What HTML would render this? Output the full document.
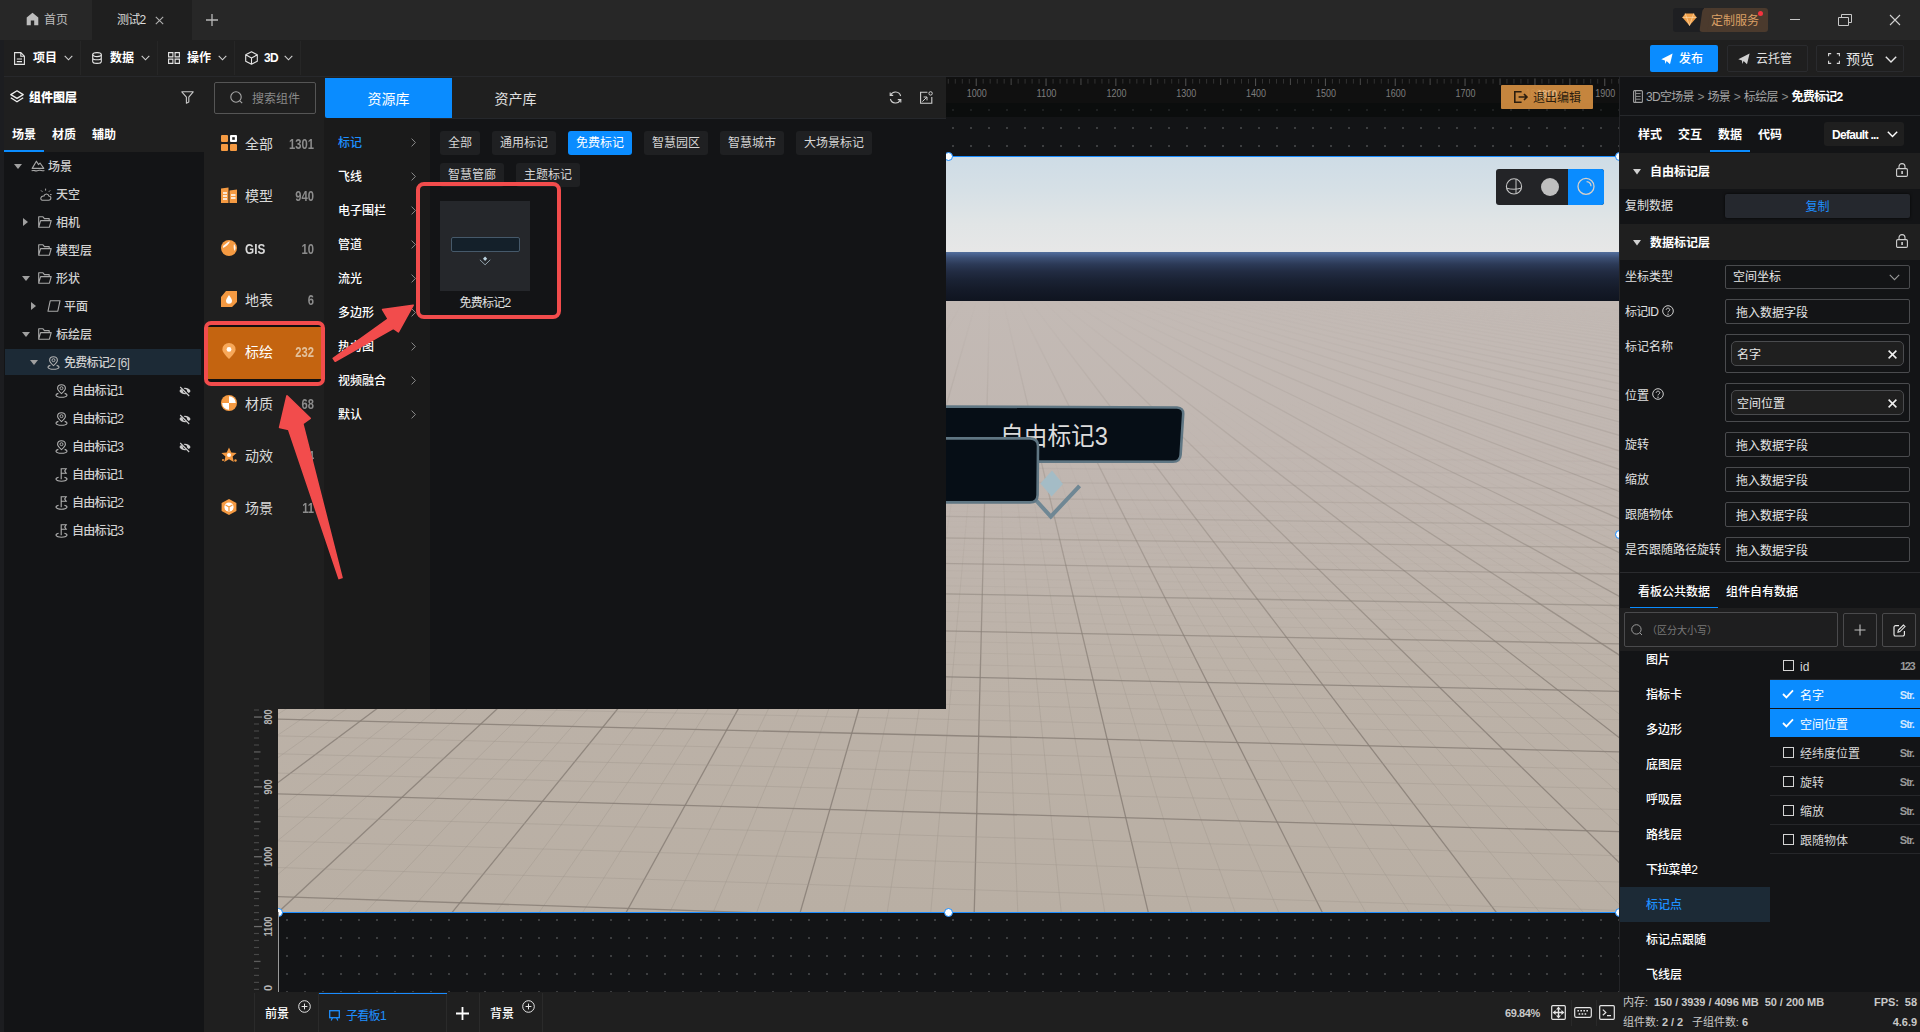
<!DOCTYPE html>
<html lang="zh-CN"><head><meta charset="utf-8"><title>测试2</title>
<style>
*{box-sizing:border-box;margin:0;padding:0}
html,body{width:1920px;height:1032px;overflow:hidden;background:#131416}
body{position:relative;font-family:"Liberation Sans","Noto Sans CJK SC",sans-serif;font-size:12px;color:#e0e0e0;-webkit-font-smoothing:antialiased}
.a{position:absolute}
.t{position:absolute;white-space:nowrap;line-height:22px;height:22px}
.b{font-weight:700}
.n{letter-spacing:-0.7px}
svg{position:absolute;overflow:visible}
.chip{position:absolute;height:24px;line-height:25px;padding:0 8px;background:#1f2022;border-radius:3px;color:#d6d6d6;white-space:nowrap}
.inp{position:absolute;left:1725px;width:185px;border:1px solid #4a4b4e;border-radius:2px;color:#e6e6e6;padding-left:10px;white-space:nowrap}
.pill{position:absolute;left:1731px;width:173px;height:25px;border:1px solid #4a4b4e;border-radius:5px;background:#1f1f1f;line-height:26px;padding-left:5px;color:#e6e6e6}
.lab{position:absolute;left:1625px;white-space:nowrap;color:#e0e0e0;line-height:22px}
.row2{position:absolute;left:1770px;width:150px;height:29px;border-bottom:1px solid #26272a}
</style></head><body>

<div class="a" style="left:0;top:0;width:1920px;height:40px;background:#272727"></div>
<div class="a" style="left:92px;top:0;width:100px;height:40px;background:#1f1f1f"></div>
<svg style="left:26px;top:12px" width="13" height="14" viewBox="0 0 13 14"><path d="M6.5 0.8 L12.3 5.6 V13.2 H8.2 V8.6 H4.8 V13.2 H0.7 V5.6 Z" fill="#bdbdbd"/></svg>
<div class="t" style="left:44px;top:9px;color:#bdbdbd">首页</div>
<div class="t n" style="left:117px;top:9px;color:#dcdcdc">测试2</div>
<svg style="left:155px;top:16px" width="9" height="9" viewBox="0 0 9 9"><path d="M0.8 0.8 L8.2 8.2 M8.2 0.8 L0.8 8.2" stroke="#b0b0b0" stroke-width="1.1" fill="none"/></svg>
<svg style="left:206px;top:14px" width="12" height="12" viewBox="0 0 12 12"><path d="M6 0 V12 M0 6 H12" stroke="#b8b8b8" stroke-width="1.3" fill="none"/></svg>
<div class="a" style="left:1672.5px;top:8px;width:32px;height:24px;background:#1e1f22;border-radius:3px 0 0 3px"></div>
<div class="a" style="left:1704px;top:8px;width:64px;height:24px;background:#4b3a2d;border-radius:0 3px 3px 0"></div><div class="a" style="left:1700.5px;top:8px;width:8px;height:24px;background:#4b3a2d;border-radius:4px 0 0 3px;transform:skewX(-8deg)"></div>
<svg style="left:1682px;top:13px" width="15" height="13" viewBox="0 0 15 13"><path d="M3.2 0.5 H11.8 L14.6 4.4 L7.5 12.6 L0.4 4.4 Z" fill="#f0a04a"/><path d="M3.2 0.5 L7.5 12.6 L11.8 0.5 M0.4 4.4 H14.6" stroke="#ffd9a8" stroke-width="0.7" fill="none"/></svg>
<div class="t" style="left:1711px;top:10px;color:#dba066">定制服务</div>
<div class="a" style="left:1758px;top:11px;width:5px;height:5px;border-radius:50%;background:#f5333f"></div>
<div class="a" style="left:1790px;top:19px;width:10px;height:1px;background:#c8c8c8"></div>
<svg style="left:1838px;top:14px" width="14" height="12" viewBox="0 0 14 12"><path d="M0.5 3.5 H10.5 V11.5 H0.5 Z M3.5 3.5 V0.5 H13.5 V8.5 H10.5" stroke="#c8c8c8" stroke-width="1" fill="none"/></svg>
<svg style="left:1890px;top:15px" width="10" height="10" viewBox="0 0 10 10"><path d="M0 0 L10 10 M10 0 L0 10" stroke="#d0d0d0" stroke-width="1.1" fill="none"/></svg>
<div class="a" style="left:0;top:40px;width:1920px;height:37px;background:#1f1f1f"></div>
<div class="a" style="left:0;top:40px;width:4px;height:992px;background:#1c1d20"></div>
<div class="a" style="left:80px;top:41px;width:1px;height:34px;background:#262626"></div>
<div class="a" style="left:157px;top:41px;width:1px;height:34px;background:#262626"></div>
<div class="a" style="left:234px;top:41px;width:1px;height:34px;background:#262626"></div>
<div class="a" style="left:300px;top:41px;width:1px;height:34px;background:#262626"></div>
<div class="a" style="left:4px;top:76px;width:1916px;height:1px;background:#27282b"></div>
<svg style="left:14px;top:52px" width="11" height="13" viewBox="0 0 11 13"><path d="M0.6 0.6 H6.8 L10.4 4.2 V12.4 H0.6 Z M6.8 0.6 V4.2 H10.4 M2.8 7 H8 M2.8 9.6 H8" stroke="#e6e6e6" stroke-width="1.1" fill="none"/></svg>
<div class="t b" style="left:33px;top:47px;color:#fff">项目</div>
<svg style="left:64px;top:55px" width="9" height="6" viewBox="0 0 9 6"><path d="M0.7 0.8 L4.5 4.8 L8.3 0.8" stroke="#d0d0d0" stroke-width="1.1" fill="none"/></svg>
<svg style="left:92px;top:52px" width="10" height="12" viewBox="0 0 10 12"><ellipse cx="5" cy="2.6" rx="4.3" ry="2" stroke="#e6e6e6" stroke-width="1.1" fill="none"/><path d="M0.7 2.6 V9.4 C0.7 12 9.3 12 9.3 9.4 V2.6 M0.7 6 C0.7 8.4 9.3 8.4 9.3 6" stroke="#e6e6e6" stroke-width="1.1" fill="none"/></svg>
<div class="t b" style="left:110px;top:47px;color:#fff">数据</div>
<svg style="left:141px;top:55px" width="9" height="6" viewBox="0 0 9 6"><path d="M0.7 0.8 L4.5 4.8 L8.3 0.8" stroke="#d0d0d0" stroke-width="1.1" fill="none"/></svg>
<svg style="left:168px;top:52px" width="12" height="12" viewBox="0 0 12 12"><path d="M0.6 0.6 H4.9 V4.9 H0.6 Z M7.1 0.6 H11.4 V4.9 H7.1 Z M0.6 7.1 H4.9 V11.4 H0.6 Z M7.1 7.1 H11.4 V11.4 H7.1 Z" stroke="#e6e6e6" stroke-width="1.1" fill="none"/></svg>
<div class="t b" style="left:187px;top:47px;color:#fff">操作</div>
<svg style="left:218px;top:55px" width="9" height="6" viewBox="0 0 9 6"><path d="M0.7 0.8 L4.5 4.8 L8.3 0.8" stroke="#d0d0d0" stroke-width="1.1" fill="none"/></svg>
<svg style="left:245px;top:51px" width="13" height="14" viewBox="0 0 13 14"><path d="M6.5 0.7 L12.3 3.8 V10.2 L6.5 13.3 L0.7 10.2 V3.8 Z M0.7 3.8 L6.5 7 L12.3 3.8 M6.5 7 V13.3" stroke="#e6e6e6" stroke-width="1.1" fill="none" stroke-linejoin="round"/></svg>
<div class="t b n" style="left:264px;top:47px;color:#fff">3D</div>
<svg style="left:284px;top:55px" width="9" height="6" viewBox="0 0 9 6"><path d="M0.7 0.8 L4.5 4.8 L8.3 0.8" stroke="#d0d0d0" stroke-width="1.1" fill="none"/></svg>
<div class="a" style="left:1650px;top:45px;width:68px;height:27px;background:#0a8cff;border-radius:2px"></div>
<svg style="left:1661px;top:53px" width="12" height="12" viewBox="0 0 12 12"><path d="M0.3 6.2 L11.6 0.6 L9 11.2 L5.6 8 L4.4 11 L3.9 7.4 Z" fill="#fff"/></svg>
<div class="t" style="left:1679px;top:48px;color:#fff;font-weight:500">发布</div>
<div class="a" style="left:1727px;top:45px;width:81px;height:27px;border:1px solid #2a2b2e;border-radius:2px"></div>
<svg style="left:1738px;top:53px" width="12" height="12" viewBox="0 0 12 12"><path d="M0.3 6.2 L11.6 0.6 L9 11.2 L5.6 8 L4.4 11 L3.9 7.4 Z" fill="#d0d0d0"/></svg>
<div class="t" style="left:1756px;top:48px;color:#e0e0e0">云托管</div>
<div class="a" style="left:1816px;top:45px;width:88px;height:27px;border:1px solid #2a2b2e;border-radius:2px"></div>
<svg style="left:1828px;top:53px" width="12" height="11" viewBox="0 0 12 11"><path d="M0.6 3.2 V0.6 H3.2 M8.8 0.6 H11.4 V3.2 M11.4 7.8 V10.4 H8.8 M3.2 10.4 H0.6 V7.8" stroke="#d8d8d8" stroke-width="1.1" fill="none"/></svg>
<div class="t" style="left:1846px;top:48px;color:#e6e6e6;font-size:14px">预览</div>
<svg style="left:1885px;top:56px" width="12" height="7" viewBox="0 0 12 7"><path d="M0.8 0.8 L6 6 L11.2 0.8" stroke="#e6e6e6" stroke-width="1.4" fill="none"/></svg>
<div class="a" style="left:4px;top:77px;width:200px;height:75px;background:#1f1f1f"></div>
<div class="a" style="left:4px;top:152px;width:200px;height:880px;background:#131416"></div>
<svg style="left:10px;top:90px" width="14" height="13" viewBox="0 0 14 13"><path d="M7 0.8 L13.2 4.6 L7 8.4 L0.8 4.6 Z M0.8 7.8 L7 11.8 L13.2 7.8" stroke="#f0f0f0" stroke-width="1.3" fill="none" stroke-linejoin="round"/></svg>
<div class="t b" style="left:29px;top:87px;color:#fff;font-weight:900">组件图层</div>
<svg style="left:181px;top:91px" width="13" height="13" viewBox="0 0 13 13"><path d="M0.8 0.8 H12.2 L7.8 6.2 V11 L5.4 12.2 V6.2 Z" stroke="#c8c8c8" stroke-width="1.1" fill="none" stroke-linejoin="round"/></svg>
<div class="t b" style="left:12px;top:124px;color:#fff">场景</div>
<div class="t b" style="left:52px;top:124px;color:#fff">材质</div>
<div class="t b" style="left:92px;top:124px;color:#fff">辅助</div>
<div class="a" style="left:4px;top:150px;width:40px;height:2px;background:#0a8cff"></div>
<div class="a" style="left:5px;top:349px;width:196px;height:26px;background:#1c2a36"></div>
<svg style="left:14px;top:164px" width="8" height="5" viewBox="0 0 8 5"><path d="M0 0 H8 L4 5 Z" fill="#a0a0a0"/></svg>
<svg style="left:31px;top:160px" width="14" height="12" viewBox="0 0 14 12"><path d="M1.2 8.4 L5.4 1.2 L7.6 4.6 L9 3 L12.8 8.4 Z M0.6 10.8 C3 9.6 4.4 11.6 7 10.6 C9.6 9.6 11 11.4 13.4 10.4" stroke="#a8a8a8" stroke-width="1.1" fill="none" stroke-linejoin="round"/></svg>
<div class="t" style="left:48px;top:156px;color:#d0d0d0;font-weight:500">场景</div>
<svg style="left:39px;top:188px" width="13" height="13" viewBox="0 0 13 13"><path d="M3.4 12.2 H9.6 C12.6 12.2 12.6 8 9.8 8 C9.6 5.4 5.4 5.2 5 8 C1.4 7.6 0.8 12.2 3.4 12.2 Z" stroke="#a8a8a8" stroke-width="1.1" fill="none"/><path d="M6.6 2.6 V0.6 M9.8 3.8 L11.2 2.4 M3.4 3.8 L2 2.4 M11 6.6 H12.6" stroke="#a8a8a8" stroke-width="1" fill="none"/></svg>
<div class="t" style="left:56px;top:184px;color:#d0d0d0;font-weight:500">天空</div>
<svg style="left:23px;top:218px" width="5" height="8" viewBox="0 0 5 8"><path d="M0 0 V8 L5 4 Z" fill="#a0a0a0"/></svg>
<svg style="left:38px;top:216px" width="14" height="12" viewBox="0 0 14 12"><path d="M0.7 11.2 V0.8 H5 L6.4 2.6 H11.2 V4.6 M0.7 11.2 L2.6 4.6 H13.2 L11.4 11.2 Z" stroke="#a8a8a8" stroke-width="1.1" fill="none" stroke-linejoin="round"/></svg>
<div class="t" style="left:56px;top:212px;color:#d0d0d0;font-weight:500">相机</div>
<svg style="left:38px;top:244px" width="14" height="12" viewBox="0 0 14 12"><path d="M0.7 11.2 V0.8 H5 L6.4 2.6 H11.2 V4.6 M0.7 11.2 L2.6 4.6 H13.2 L11.4 11.2 Z" stroke="#a8a8a8" stroke-width="1.1" fill="none" stroke-linejoin="round"/></svg>
<div class="t" style="left:56px;top:240px;color:#d0d0d0;font-weight:500">模型层</div>
<svg style="left:22px;top:276px" width="8" height="5" viewBox="0 0 8 5"><path d="M0 0 H8 L4 5 Z" fill="#a0a0a0"/></svg>
<svg style="left:38px;top:272px" width="14" height="12" viewBox="0 0 14 12"><path d="M0.7 11.2 V0.8 H5 L6.4 2.6 H11.2 V4.6 M0.7 11.2 L2.6 4.6 H13.2 L11.4 11.2 Z" stroke="#a8a8a8" stroke-width="1.1" fill="none" stroke-linejoin="round"/></svg>
<div class="t" style="left:56px;top:268px;color:#d0d0d0;font-weight:500">形状</div>
<svg style="left:31px;top:302px" width="5" height="8" viewBox="0 0 5 8"><path d="M0 0 V8 L5 4 Z" fill="#a0a0a0"/></svg>
<svg style="left:47px;top:300px" width="14" height="12" viewBox="0 0 14 12"><path d="M3.2 0.8 H13 L10.8 11.2 H1 Z" stroke="#a8a8a8" stroke-width="1.1" fill="none" stroke-linejoin="round"/></svg>
<div class="t" style="left:64px;top:296px;color:#d0d0d0;font-weight:500">平面</div>
<svg style="left:22px;top:332px" width="8" height="5" viewBox="0 0 8 5"><path d="M0 0 H8 L4 5 Z" fill="#a0a0a0"/></svg>
<svg style="left:38px;top:328px" width="14" height="12" viewBox="0 0 14 12"><path d="M0.7 11.2 V0.8 H5 L6.4 2.6 H11.2 V4.6 M0.7 11.2 L2.6 4.6 H13.2 L11.4 11.2 Z" stroke="#a8a8a8" stroke-width="1.1" fill="none" stroke-linejoin="round"/></svg>
<div class="t" style="left:56px;top:324px;color:#d0d0d0;font-weight:500">标绘层</div>
<svg style="left:30px;top:360px" width="8" height="5" viewBox="0 0 8 5"><path d="M0 0 H8 L4 5 Z" fill="#a0a0a0"/></svg>
<svg style="left:47px;top:356px" width="13" height="14" viewBox="0 0 13 14"><path d="M6.5 9.6 C3.6 7 2.6 5.6 2.6 4.2 C2.6 2.2 4.2 0.7 6.5 0.7 C8.8 0.7 10.4 2.2 10.4 4.2 C10.4 5.6 9.4 7 6.5 9.6 Z" stroke="#b0b0b0" stroke-width="1.1" fill="none"/><circle cx="6.5" cy="4.2" r="1.5" stroke="#b0b0b0" stroke-width="1" fill="none"/><path d="M3.4 9.4 C-0.6 10.4 0.4 13.2 6.5 13.2 C12.6 13.2 13.6 10.4 9.6 9.4" stroke="#b0b0b0" stroke-width="1.1" fill="none"/></svg>
<div class="t n" style="left:64px;top:352px;color:#d0d0d0;font-weight:500">免费标记2 [6]</div>
<svg style="left:55px;top:384px" width="13" height="14" viewBox="0 0 13 14"><path d="M6.5 9.6 C3.6 7 2.6 5.6 2.6 4.2 C2.6 2.2 4.2 0.7 6.5 0.7 C8.8 0.7 10.4 2.2 10.4 4.2 C10.4 5.6 9.4 7 6.5 9.6 Z" stroke="#b0b0b0" stroke-width="1.1" fill="none"/><circle cx="6.5" cy="4.2" r="1.5" stroke="#b0b0b0" stroke-width="1" fill="none"/><path d="M3.4 9.4 C-0.6 10.4 0.4 13.2 6.5 13.2 C12.6 13.2 13.6 10.4 9.6 9.4" stroke="#b0b0b0" stroke-width="1.1" fill="none"/></svg>
<div class="t n" style="left:72px;top:380px;color:#d0d0d0;font-weight:500">自由标记1</div>
<svg style="left:179px;top:386px" width="12" height="10" viewBox="0 0 12 10"><path d="M0.4 5 C3 0.6 9 0.6 11.6 5 C9 9.4 3 9.4 0.4 5 Z" fill="#cfcfcf"/><circle cx="6" cy="5" r="2.1" fill="#131416"/><path d="M1.6 0.6 L10.6 9.6" stroke="#131416" stroke-width="2.2"/><path d="M1.2 1 L10.2 10" stroke="#cfcfcf" stroke-width="1.1"/></svg>
<svg style="left:55px;top:412px" width="13" height="14" viewBox="0 0 13 14"><path d="M6.5 9.6 C3.6 7 2.6 5.6 2.6 4.2 C2.6 2.2 4.2 0.7 6.5 0.7 C8.8 0.7 10.4 2.2 10.4 4.2 C10.4 5.6 9.4 7 6.5 9.6 Z" stroke="#b0b0b0" stroke-width="1.1" fill="none"/><circle cx="6.5" cy="4.2" r="1.5" stroke="#b0b0b0" stroke-width="1" fill="none"/><path d="M3.4 9.4 C-0.6 10.4 0.4 13.2 6.5 13.2 C12.6 13.2 13.6 10.4 9.6 9.4" stroke="#b0b0b0" stroke-width="1.1" fill="none"/></svg>
<div class="t n" style="left:72px;top:408px;color:#d0d0d0;font-weight:500">自由标记2</div>
<svg style="left:179px;top:414px" width="12" height="10" viewBox="0 0 12 10"><path d="M0.4 5 C3 0.6 9 0.6 11.6 5 C9 9.4 3 9.4 0.4 5 Z" fill="#cfcfcf"/><circle cx="6" cy="5" r="2.1" fill="#131416"/><path d="M1.6 0.6 L10.6 9.6" stroke="#131416" stroke-width="2.2"/><path d="M1.2 1 L10.2 10" stroke="#cfcfcf" stroke-width="1.1"/></svg>
<svg style="left:55px;top:440px" width="13" height="14" viewBox="0 0 13 14"><path d="M6.5 9.6 C3.6 7 2.6 5.6 2.6 4.2 C2.6 2.2 4.2 0.7 6.5 0.7 C8.8 0.7 10.4 2.2 10.4 4.2 C10.4 5.6 9.4 7 6.5 9.6 Z" stroke="#b0b0b0" stroke-width="1.1" fill="none"/><circle cx="6.5" cy="4.2" r="1.5" stroke="#b0b0b0" stroke-width="1" fill="none"/><path d="M3.4 9.4 C-0.6 10.4 0.4 13.2 6.5 13.2 C12.6 13.2 13.6 10.4 9.6 9.4" stroke="#b0b0b0" stroke-width="1.1" fill="none"/></svg>
<div class="t n" style="left:72px;top:436px;color:#d0d0d0;font-weight:500">自由标记3</div>
<svg style="left:179px;top:442px" width="12" height="10" viewBox="0 0 12 10"><path d="M0.4 5 C3 0.6 9 0.6 11.6 5 C9 9.4 3 9.4 0.4 5 Z" fill="#cfcfcf"/><circle cx="6" cy="5" r="2.1" fill="#131416"/><path d="M1.6 0.6 L10.6 9.6" stroke="#131416" stroke-width="2.2"/><path d="M1.2 1 L10.2 10" stroke="#cfcfcf" stroke-width="1.1"/></svg>
<svg style="left:55px;top:468px" width="13" height="14" viewBox="0 0 13 14"><path d="M6.2 11.2 V0.8 H11.2 L9.7 3 L11.2 5.2 H6.2" stroke="#b0b0b0" stroke-width="1.1" fill="none"/><path d="M3.6 9.2 C-0.6 10.2 0.2 13.2 6.5 13.2 C12.8 13.2 13.6 10.2 9.4 9.2" stroke="#b0b0b0" stroke-width="1.1" fill="none"/></svg>
<div class="t n" style="left:72px;top:464px;color:#d0d0d0;font-weight:500">自由标记1</div>
<svg style="left:55px;top:496px" width="13" height="14" viewBox="0 0 13 14"><path d="M6.2 11.2 V0.8 H11.2 L9.7 3 L11.2 5.2 H6.2" stroke="#b0b0b0" stroke-width="1.1" fill="none"/><path d="M3.6 9.2 C-0.6 10.2 0.2 13.2 6.5 13.2 C12.8 13.2 13.6 10.2 9.4 9.2" stroke="#b0b0b0" stroke-width="1.1" fill="none"/></svg>
<div class="t n" style="left:72px;top:492px;color:#d0d0d0;font-weight:500">自由标记2</div>
<svg style="left:55px;top:524px" width="13" height="14" viewBox="0 0 13 14"><path d="M6.2 11.2 V0.8 H11.2 L9.7 3 L11.2 5.2 H6.2" stroke="#b0b0b0" stroke-width="1.1" fill="none"/><path d="M3.6 9.2 C-0.6 10.2 0.2 13.2 6.5 13.2 C12.8 13.2 13.6 10.2 9.4 9.2" stroke="#b0b0b0" stroke-width="1.1" fill="none"/></svg>
<div class="t n" style="left:72px;top:520px;color:#d0d0d0;font-weight:500">自由标记3</div>
<div class="a" style="left:204px;top:77px;width:1416px;height:915px;background-color:#131416;background-image:radial-gradient(circle,#3d3e40 0.75px,transparent 1.05px);background-size:18px 18px;background-position:2px 6px"></div>
<div class="a" style="left:254px;top:77px;width:1366px;height:26px;background:#101010"></div>
<div class="a" style="left:254px;top:103px;width:1366px;height:14px;background:rgba(6,7,7,0.55)"></div>
<svg style="left:0;top:0" width="1920" height="120" viewBox="0 0 1920 120"><rect x="905.8" y="78.5" width="1.1" height="7.5" fill="#4d4d4d"/><rect x="912.9" y="79" width="0.9" height="4.6" fill="#363636"/><rect x="919.9" y="79" width="0.9" height="4.6" fill="#363636"/><rect x="926.9" y="79" width="0.9" height="4.6" fill="#363636"/><rect x="933.8" y="79" width="0.9" height="4.6" fill="#363636"/><rect x="940.7" y="78.5" width="1.1" height="6.5" fill="#444"/><rect x="947.8" y="79" width="0.9" height="4.6" fill="#363636"/><rect x="954.8" y="79" width="0.9" height="4.6" fill="#363636"/><rect x="961.8" y="79" width="0.9" height="4.6" fill="#363636"/><rect x="968.8" y="79" width="0.9" height="4.6" fill="#363636"/><rect x="975.7" y="78.5" width="1.1" height="7.5" fill="#4d4d4d"/><rect x="982.7" y="79" width="0.9" height="4.6" fill="#363636"/><rect x="989.7" y="79" width="0.9" height="4.6" fill="#363636"/><rect x="996.7" y="79" width="0.9" height="4.6" fill="#363636"/><rect x="1003.7" y="79" width="0.9" height="4.6" fill="#363636"/><rect x="1010.6" y="78.5" width="1.1" height="6.5" fill="#444"/><rect x="1017.7" y="79" width="0.9" height="4.6" fill="#363636"/><rect x="1024.6" y="79" width="0.9" height="4.6" fill="#363636"/><rect x="1031.6" y="79" width="0.9" height="4.6" fill="#363636"/><rect x="1038.6" y="79" width="0.9" height="4.6" fill="#363636"/><rect x="1045.5" y="78.5" width="1.1" height="7.5" fill="#4d4d4d"/><rect x="1052.6" y="79" width="0.9" height="4.6" fill="#363636"/><rect x="1059.6" y="79" width="0.9" height="4.6" fill="#363636"/><rect x="1066.5" y="79" width="0.9" height="4.6" fill="#363636"/><rect x="1073.5" y="79" width="0.9" height="4.6" fill="#363636"/><rect x="1080.4" y="78.5" width="1.1" height="6.5" fill="#444"/><rect x="1087.5" y="79" width="0.9" height="4.6" fill="#363636"/><rect x="1094.5" y="79" width="0.9" height="4.6" fill="#363636"/><rect x="1101.5" y="79" width="0.9" height="4.6" fill="#363636"/><rect x="1108.4" y="79" width="0.9" height="4.6" fill="#363636"/><rect x="1115.3" y="78.5" width="1.1" height="7.5" fill="#4d4d4d"/><rect x="1122.4" y="79" width="0.9" height="4.6" fill="#363636"/><rect x="1129.4" y="79" width="0.9" height="4.6" fill="#363636"/><rect x="1136.4" y="79" width="0.9" height="4.6" fill="#363636"/><rect x="1143.4" y="79" width="0.9" height="4.6" fill="#363636"/><rect x="1150.2" y="78.5" width="1.1" height="6.5" fill="#444"/><rect x="1157.3" y="79" width="0.9" height="4.6" fill="#363636"/><rect x="1164.3" y="79" width="0.9" height="4.6" fill="#363636"/><rect x="1171.3" y="79" width="0.9" height="4.6" fill="#363636"/><rect x="1178.3" y="79" width="0.9" height="4.6" fill="#363636"/><rect x="1185.2" y="78.5" width="1.1" height="7.5" fill="#4d4d4d"/><rect x="1192.3" y="79" width="0.9" height="4.6" fill="#363636"/><rect x="1199.2" y="79" width="0.9" height="4.6" fill="#363636"/><rect x="1206.2" y="79" width="0.9" height="4.6" fill="#363636"/><rect x="1213.2" y="79" width="0.9" height="4.6" fill="#363636"/><rect x="1220.1" y="78.5" width="1.1" height="6.5" fill="#444"/><rect x="1227.2" y="79" width="0.9" height="4.6" fill="#363636"/><rect x="1234.2" y="79" width="0.9" height="4.6" fill="#363636"/><rect x="1241.1" y="79" width="0.9" height="4.6" fill="#363636"/><rect x="1248.1" y="79" width="0.9" height="4.6" fill="#363636"/><rect x="1255.0" y="78.5" width="1.1" height="7.5" fill="#4d4d4d"/><rect x="1262.1" y="79" width="0.9" height="4.6" fill="#363636"/><rect x="1269.1" y="79" width="0.9" height="4.6" fill="#363636"/><rect x="1276.1" y="79" width="0.9" height="4.6" fill="#363636"/><rect x="1283.0" y="79" width="0.9" height="4.6" fill="#363636"/><rect x="1289.9" y="78.5" width="1.1" height="6.5" fill="#444"/><rect x="1297.0" y="79" width="0.9" height="4.6" fill="#363636"/><rect x="1304.0" y="79" width="0.9" height="4.6" fill="#363636"/><rect x="1311.0" y="79" width="0.9" height="4.6" fill="#363636"/><rect x="1318.0" y="79" width="0.9" height="4.6" fill="#363636"/><rect x="1324.9" y="78.5" width="1.1" height="7.5" fill="#4d4d4d"/><rect x="1331.9" y="79" width="0.9" height="4.6" fill="#363636"/><rect x="1338.9" y="79" width="0.9" height="4.6" fill="#363636"/><rect x="1345.9" y="79" width="0.9" height="4.6" fill="#363636"/><rect x="1352.9" y="79" width="0.9" height="4.6" fill="#363636"/><rect x="1359.8" y="78.5" width="1.1" height="6.5" fill="#444"/><rect x="1366.9" y="79" width="0.9" height="4.6" fill="#363636"/><rect x="1373.8" y="79" width="0.9" height="4.6" fill="#363636"/><rect x="1380.8" y="79" width="0.9" height="4.6" fill="#363636"/><rect x="1387.8" y="79" width="0.9" height="4.6" fill="#363636"/><rect x="1394.7" y="78.5" width="1.1" height="7.5" fill="#4d4d4d"/><rect x="1401.8" y="79" width="0.9" height="4.6" fill="#363636"/><rect x="1408.8" y="79" width="0.9" height="4.6" fill="#363636"/><rect x="1415.7" y="79" width="0.9" height="4.6" fill="#363636"/><rect x="1422.7" y="79" width="0.9" height="4.6" fill="#363636"/><rect x="1429.6" y="78.5" width="1.1" height="6.5" fill="#444"/><rect x="1436.7" y="79" width="0.9" height="4.6" fill="#363636"/><rect x="1443.7" y="79" width="0.9" height="4.6" fill="#363636"/><rect x="1450.7" y="79" width="0.9" height="4.6" fill="#363636"/><rect x="1457.6" y="79" width="0.9" height="4.6" fill="#363636"/><rect x="1464.5" y="78.5" width="1.1" height="7.5" fill="#4d4d4d"/><rect x="1471.6" y="79" width="0.9" height="4.6" fill="#363636"/><rect x="1478.6" y="79" width="0.9" height="4.6" fill="#363636"/><rect x="1485.6" y="79" width="0.9" height="4.6" fill="#363636"/><rect x="1492.6" y="79" width="0.9" height="4.6" fill="#363636"/><rect x="1499.5" y="78.5" width="1.1" height="6.5" fill="#444"/><rect x="1506.5" y="79" width="0.9" height="4.6" fill="#363636"/><rect x="1513.5" y="79" width="0.9" height="4.6" fill="#363636"/><rect x="1520.5" y="79" width="0.9" height="4.6" fill="#363636"/><rect x="1527.5" y="79" width="0.9" height="4.6" fill="#363636"/><rect x="1534.4" y="78.5" width="1.1" height="7.5" fill="#4d4d4d"/><rect x="1541.5" y="79" width="0.9" height="4.6" fill="#363636"/><rect x="1548.4" y="79" width="0.9" height="4.6" fill="#363636"/><rect x="1555.4" y="79" width="0.9" height="4.6" fill="#363636"/><rect x="1562.4" y="79" width="0.9" height="4.6" fill="#363636"/><rect x="1569.3" y="78.5" width="1.1" height="6.5" fill="#444"/><rect x="1576.4" y="79" width="0.9" height="4.6" fill="#363636"/><rect x="1583.4" y="79" width="0.9" height="4.6" fill="#363636"/><rect x="1590.3" y="79" width="0.9" height="4.6" fill="#363636"/><rect x="1597.3" y="79" width="0.9" height="4.6" fill="#363636"/><rect x="1604.2" y="78.5" width="1.1" height="7.5" fill="#4d4d4d"/><rect x="1611.3" y="79" width="0.9" height="4.6" fill="#363636"/><rect x="1618.3" y="79" width="0.9" height="4.6" fill="#363636"/><rect x="1625.3" y="79" width="0.9" height="4.6" fill="#363636"/><text x="976.7" y="97" text-anchor="middle" font-size="11" fill="#7d7d7d" font-family="Liberation Sans, sans-serif" textLength="20" lengthAdjust="spacingAndGlyphs">1000</text><text x="1046.5" y="97" text-anchor="middle" font-size="11" fill="#7d7d7d" font-family="Liberation Sans, sans-serif" textLength="20" lengthAdjust="spacingAndGlyphs">1100</text><text x="1116.4" y="97" text-anchor="middle" font-size="11" fill="#7d7d7d" font-family="Liberation Sans, sans-serif" textLength="20" lengthAdjust="spacingAndGlyphs">1200</text><text x="1186.2" y="97" text-anchor="middle" font-size="11" fill="#7d7d7d" font-family="Liberation Sans, sans-serif" textLength="20" lengthAdjust="spacingAndGlyphs">1300</text><text x="1256.1" y="97" text-anchor="middle" font-size="11" fill="#7d7d7d" font-family="Liberation Sans, sans-serif" textLength="20" lengthAdjust="spacingAndGlyphs">1400</text><text x="1325.9" y="97" text-anchor="middle" font-size="11" fill="#7d7d7d" font-family="Liberation Sans, sans-serif" textLength="20" lengthAdjust="spacingAndGlyphs">1500</text><text x="1395.7" y="97" text-anchor="middle" font-size="11" fill="#7d7d7d" font-family="Liberation Sans, sans-serif" textLength="20" lengthAdjust="spacingAndGlyphs">1600</text><text x="1465.6" y="97" text-anchor="middle" font-size="11" fill="#7d7d7d" font-family="Liberation Sans, sans-serif" textLength="20" lengthAdjust="spacingAndGlyphs">1700</text><text x="1535.4" y="97" text-anchor="middle" font-size="11" fill="#7d7d7d" font-family="Liberation Sans, sans-serif" textLength="20" lengthAdjust="spacingAndGlyphs">1800</text><text x="1605.3" y="97" text-anchor="middle" font-size="11" fill="#7d7d7d" font-family="Liberation Sans, sans-serif" textLength="20" lengthAdjust="spacingAndGlyphs">1900</text></svg>
<div class="a" style="left:278px;top:157px;width:1341px;height:755px;overflow:hidden;background:#beb4ac">
<div class="a" style="left:0;top:0;width:1341px;height:95px;background:linear-gradient(#cedce6 0%,#d6e0e6 35%,#e1e5e6 70%,#e7e7e7 100%)"></div>
<div class="a" style="left:0;top:94.7px;width:1341px;height:51px;background:linear-gradient(#54709c 0%,#4a6390 4%,#3b4e72 12%,#2c3a57 24%,#222c43 38%,#1a2234 55%,#141a28 75%,#0e131e 100%)"></div>
<div class="a" style="left:0;top:144px;width:1341px;height:611px;background:linear-gradient(#c3bab5 0%,#c0b6b0 30%,#bcb2a8 60%,#b9afa4 100%)"></div>
<svg style="left:0;top:0" width="1341" height="755" viewBox="278 157 1341 755"><defs><clipPath id="gc"><rect x="278" y="301" width="1341" height="611"/></clipPath><linearGradient id="ga" gradientUnits="userSpaceOnUse" x1="0" y1="301" x2="0" y2="912"><stop offset="0.000" stop-color="#fff" stop-opacity="0.00"/><stop offset="0.064" stop-color="#fff" stop-opacity="0.06"/><stop offset="0.244" stop-color="#fff" stop-opacity="0.30"/><stop offset="0.408" stop-color="#fff" stop-opacity="0.55"/><stop offset="0.653" stop-color="#fff" stop-opacity="1.00"/><stop offset="1.000" stop-color="#fff" stop-opacity="1.00"/></linearGradient><mask id="mga" maskUnits="userSpaceOnUse" x="278" y="301" width="1341" height="611"><rect x="278" y="301" width="1341" height="611" fill="url(#ga)"/></mask><linearGradient id="gb" gradientUnits="userSpaceOnUse" x1="0" y1="301" x2="0" y2="912"><stop offset="0.000" stop-color="#fff" stop-opacity="0.00"/><stop offset="0.162" stop-color="#fff" stop-opacity="0.00"/><stop offset="0.326" stop-color="#fff" stop-opacity="0.25"/><stop offset="0.489" stop-color="#fff" stop-opacity="0.60"/><stop offset="0.702" stop-color="#fff" stop-opacity="1.00"/><stop offset="1.000" stop-color="#fff" stop-opacity="1.00"/></linearGradient><mask id="mgb" maskUnits="userSpaceOnUse" x="278" y="301" width="1341" height="611"><rect x="278" y="301" width="1341" height="611" fill="url(#gb)"/></mask></defs><g clip-path="url(#gc)"><g mask="url(#mgb)"><path d="M457.1 301.0 L-5997.9 917.6 M460.5 301.0 L-5954.0 917.6 M463.8 301.0 L-5910.2 917.6 M470.5 301.0 L-5822.5 917.6 M473.9 301.0 L-5778.6 917.6 M477.2 301.0 L-5734.8 917.6 M483.9 301.0 L-5647.1 917.6 M487.3 301.0 L-5603.2 917.6 M490.6 301.0 L-5559.4 917.6 M497.3 301.0 L-5471.7 917.6 M500.7 301.0 L-5427.8 917.6 M504.0 301.0 L-5384.0 917.6 M510.7 301.0 L-5296.3 917.6 M514.1 301.0 L-5252.4 917.6 M517.4 301.0 L-5208.6 917.6 M524.1 301.0 L-5120.9 917.6 M527.5 301.0 L-5077.0 917.6 M530.8 301.0 L-5033.2 917.6 M537.5 301.0 L-4945.5 917.6 M540.8 301.0 L-4901.7 917.6 M544.2 301.0 L-4857.8 917.6 M550.9 301.0 L-4770.1 917.6 M554.2 301.0 L-4726.3 917.6 M557.6 301.0 L-4682.4 917.6 M564.3 301.0 L-4594.7 917.6 M567.6 301.0 L-4550.9 917.6 M571.0 301.0 L-4507.0 917.6 M577.7 301.0 L-4419.3 917.6 M581.0 301.0 L-4375.5 917.6 M584.4 301.0 L-4331.6 917.6 M591.1 301.0 L-4243.9 917.6 M594.4 301.0 L-4200.1 917.6 M597.8 301.0 L-4156.2 917.6 M604.5 301.0 L-4068.5 917.6 M607.8 301.0 L-4024.7 917.6 M611.2 301.0 L-3980.8 917.6 M617.9 301.0 L-3893.1 917.6 M621.2 301.0 L-3849.3 917.6 M624.6 301.0 L-3805.4 917.6 M631.3 301.0 L-3717.7 917.6 M634.6 301.0 L-3673.9 917.6 M638.0 301.0 L-3630.0 917.6 M644.7 301.0 L-3542.3 917.6 M648.0 301.0 L-3498.5 917.6 M651.4 301.0 L-3454.6 917.6 M658.1 301.0 L-3366.9 917.6 M661.4 301.0 L-3323.1 917.6 M664.8 301.0 L-3279.2 917.6 M671.5 301.0 L-3191.5 917.6 M674.8 301.0 L-3147.7 917.6 M678.2 301.0 L-3103.8 917.6 M684.9 301.0 L-3016.1 917.6 M688.2 301.0 L-2972.3 917.6 M691.6 301.0 L-2928.4 917.6 M698.3 301.0 L-2840.7 917.6 M701.6 301.0 L-2796.9 917.6 M705.0 301.0 L-2753.0 917.6 M711.7 301.0 L-2665.3 917.6 M715.0 301.0 L-2621.5 917.6 M718.4 301.0 L-2577.6 917.6 M725.1 301.0 L-2489.9 917.6 M728.4 301.0 L-2446.1 917.6 M731.8 301.0 L-2402.3 917.6 M738.5 301.0 L-2314.6 917.6 M741.8 301.0 L-2270.7 917.6 M745.2 301.0 L-2226.9 917.6 M751.9 301.0 L-2139.2 917.6 M755.2 301.0 L-2095.3 917.6 M758.6 301.0 L-2051.5 917.6 M765.3 301.0 L-1963.8 917.6 M768.6 301.0 L-1919.9 917.6 M772.0 301.0 L-1876.1 917.6 M778.7 301.0 L-1788.4 917.6 M782.0 301.0 L-1744.5 917.6 M785.4 301.0 L-1700.7 917.6 M792.1 301.0 L-1613.0 917.6 M795.4 301.0 L-1569.1 917.6 M798.8 301.0 L-1525.3 917.6 M805.5 301.0 L-1437.6 917.6 M808.8 301.0 L-1393.7 917.6 M812.2 301.0 L-1349.9 917.6 M818.9 301.0 L-1262.2 917.6 M822.2 301.0 L-1218.3 917.6 M825.6 301.0 L-1174.5 917.6 M832.3 301.0 L-1086.8 917.6 M835.6 301.0 L-1042.9 917.6 M839.0 301.0 L-999.1 917.6 M845.7 301.0 L-911.4 917.6 M849.0 301.0 L-867.5 917.6 M852.4 301.0 L-823.7 917.6 M859.1 301.0 L-736.0 917.6 M862.4 301.0 L-692.1 917.6 M865.8 301.0 L-648.3 917.6 M872.5 301.0 L-560.6 917.6 M875.8 301.0 L-516.7 917.6 M879.2 301.0 L-472.9 917.6 M885.9 301.0 L-385.2 917.6 M889.2 301.0 L-341.3 917.6 M892.6 301.0 L-297.5 917.6 M899.3 301.0 L-209.8 917.6 M902.6 301.0 L-165.9 917.6 M906.0 301.0 L-122.1 917.6 M912.7 301.0 L-34.4 917.6 M916.0 301.0 L9.5 917.6 M919.4 301.0 L53.3 917.6 M926.1 301.0 L141.0 917.6 M929.4 301.0 L184.8 917.6 M932.8 301.0 L228.7 917.6 M939.5 301.0 L316.4 917.6 M942.8 301.0 L360.2 917.6 M946.2 301.0 L404.1 917.6 M952.9 301.0 L491.8 917.6 M956.2 301.0 L535.6 917.6 M959.6 301.0 L579.5 917.6 M966.3 301.0 L667.2 917.6 M969.6 301.0 L711.0 917.6 M973.0 301.0 L754.9 917.6 M979.7 301.0 L842.6 917.6 M983.0 301.0 L886.4 917.6 M986.4 301.0 L930.3 917.6 M993.1 301.0 L1018.0 917.6 M996.4 301.0 L1061.8 917.6 M999.8 301.0 L1105.7 917.6 M1006.5 301.0 L1193.4 917.6 M1009.8 301.0 L1237.2 917.6 M1013.2 301.0 L1281.1 917.6 M1019.9 301.0 L1368.8 917.6 M1023.2 301.0 L1412.6 917.6 M1026.6 301.0 L1456.5 917.6 M1033.3 301.0 L1544.2 917.6 M1036.6 301.0 L1588.0 917.6 M1040.0 301.0 L1631.9 917.6 M1046.7 301.0 L1719.6 917.6 M1050.0 301.0 L1763.4 917.6 M1053.4 301.0 L1807.3 917.6 M1060.1 301.0 L1895.0 917.6 M1063.4 301.0 L1938.8 917.6 M1066.8 301.0 L1982.7 917.6 M1073.5 301.0 L2070.4 917.6 M1076.8 301.0 L2114.2 917.6 M1080.2 301.0 L2158.1 917.6 M1086.9 301.0 L2245.8 917.6 M1090.2 301.0 L2289.6 917.6 M1093.6 301.0 L2333.5 917.6 M1100.3 301.0 L2421.2 917.6 M1103.6 301.0 L2465.0 917.6 M1107.0 301.0 L2508.9 917.6 M1113.7 301.0 L2596.6 917.6 M1117.0 301.0 L2640.4 917.6 M1120.4 301.0 L2684.2 917.6 M1127.1 301.0 L2771.9 917.6 M1130.4 301.0 L2815.8 917.6 M1133.7 301.0 L2859.6 917.6 M1140.4 301.0 L2947.3 917.6 M1143.8 301.0 L2991.2 917.6 M1147.1 301.0 L3035.0 917.6 M1153.8 301.0 L3122.7 917.6 M1157.2 301.0 L3166.6 917.6 M1160.5 301.0 L3210.4 917.6 M1167.2 301.0 L3298.1 917.6 M1170.6 301.0 L3342.0 917.6 M1173.9 301.0 L3385.8 917.6 M1180.6 301.0 L3473.5 917.6 M1184.0 301.0 L3517.4 917.6 M1187.3 301.0 L3561.2 917.6 M1194.0 301.0 L3648.9 917.6 M1197.4 301.0 L3692.8 917.6 M1200.7 301.0 L3736.6 917.6 M1207.4 301.0 L3824.3 917.6 M1210.8 301.0 L3868.2 917.6 M1214.1 301.0 L3912.0 917.6 M1220.8 301.0 L3999.7 917.6 M1224.2 301.0 L4043.6 917.6 M1227.5 301.0 L4087.4 917.6 M1234.2 301.0 L4175.1 917.6 M1237.6 301.0 L4219.0 917.6 M1240.9 301.0 L4262.8 917.6 M1247.6 301.0 L4350.5 917.6 M1251.0 301.0 L4394.4 917.6 M1254.3 301.0 L4438.2 917.6 M1261.0 301.0 L4525.9 917.6 M1264.4 301.0 L4569.8 917.6 M1267.7 301.0 L4613.6 917.6 M1274.4 301.0 L4701.3 917.6 M1277.8 301.0 L4745.2 917.6 M1281.1 301.0 L4789.0 917.6 M1287.8 301.0 L4876.7 917.6 M1291.2 301.0 L4920.6 917.6 M1294.5 301.0 L4964.4 917.6 M1301.2 301.0 L5052.1 917.6 M1304.6 301.0 L5096.0 917.6 M1307.9 301.0 L5139.8 917.6 M1314.6 301.0 L5227.5 917.6 M1318.0 301.0 L5271.3 917.6 M1321.3 301.0 L5315.2 917.6 M1328.0 301.0 L5402.9 917.6 M1331.4 301.0 L5446.7 917.6 M1334.7 301.0 L5490.6 917.6 M1341.4 301.0 L5578.3 917.6 M1344.8 301.0 L5622.1 917.6 M1348.1 301.0 L5666.0 917.6 M1354.8 301.0 L5753.7 917.6 M1358.2 301.0 L5797.5 917.6 M1361.5 301.0 L5841.4 917.6 M1368.2 301.0 L5929.1 917.6 M1371.6 301.0 L5972.9 917.6 M1374.9 301.0 L6016.8 917.6 M1381.6 301.0 L6104.5 917.6 M1385.0 301.0 L6148.3 917.6 M1388.3 301.0 L6192.2 917.6 M1395.0 301.0 L6279.9 917.6 M1398.4 301.0 L6323.7 917.6 M1401.7 301.0 L6367.6 917.6 M1408.4 301.0 L6455.3 917.6 M1411.8 301.0 L6499.1 917.6 M1415.1 301.0 L6543.0 917.6 M1421.8 301.0 L6630.7 917.6 M1425.2 301.0 L6674.5 917.6 M1428.5 301.0 L6718.4 917.6 M1435.2 301.0 L6806.1 917.6 M1438.6 301.0 L6849.9 917.6 M1441.9 301.0 L6893.8 917.6 M1448.6 301.0 L6981.5 917.6 M1452.0 301.0 L7025.3 917.6 M1455.3 301.0 L7069.2 917.6 M1462.0 301.0 L7156.9 917.6 M1465.4 301.0 L7200.7 917.6 M1468.7 301.0 L7244.6 917.6 M1475.4 301.0 L7332.3 917.6 M1478.8 301.0 L7376.1 917.6 M1482.1 301.0 L7420.0 917.6 M1488.8 301.0 L7507.7 917.6 M1492.2 301.0 L7551.5 917.6 M1495.5 301.0 L7595.4 917.6 M1502.2 301.0 L7683.1 917.6 M1505.6 301.0 L7726.9 917.6 M1508.9 301.0 L7770.8 917.6 M1515.6 301.0 L7858.4 917.6 M1519.0 301.0 L7902.3 917.6 M1522.3 301.0 L7946.1 917.6" stroke="#a1978e" stroke-width="0.85" fill="none" opacity="0.5"/></g><g mask="url(#mga)"><path d="M453.8 301.0 L-6041.7 917.6 M467.2 301.0 L-5866.3 917.6 M480.6 301.0 L-5690.9 917.6 M494.0 301.0 L-5515.5 917.6 M507.4 301.0 L-5340.1 917.6 M520.8 301.0 L-5164.7 917.6 M534.1 301.0 L-4989.4 917.6 M547.5 301.0 L-4814.0 917.6 M560.9 301.0 L-4638.6 917.6 M574.3 301.0 L-4463.2 917.6 M587.7 301.0 L-4287.8 917.6 M601.1 301.0 L-4112.4 917.6 M614.5 301.0 L-3937.0 917.6 M627.9 301.0 L-3761.6 917.6 M641.3 301.0 L-3586.2 917.6 M654.7 301.0 L-3410.8 917.6 M668.1 301.0 L-3235.4 917.6 M681.5 301.0 L-3060.0 917.6 M694.9 301.0 L-2884.6 917.6 M708.3 301.0 L-2709.2 917.6 M721.7 301.0 L-2533.8 917.6 M735.1 301.0 L-2358.4 917.6 M748.5 301.0 L-2183.0 917.6 M761.9 301.0 L-2007.6 917.6 M775.3 301.0 L-1832.2 917.6 M788.7 301.0 L-1656.8 917.6 M802.1 301.0 L-1481.4 917.6 M815.5 301.0 L-1306.0 917.6 M828.9 301.0 L-1130.6 917.6 M842.3 301.0 L-955.2 917.6 M855.7 301.0 L-779.8 917.6 M869.1 301.0 L-604.4 917.6 M882.5 301.0 L-429.0 917.6 M895.9 301.0 L-253.6 917.6 M909.3 301.0 L-78.2 917.6 M922.7 301.0 L97.1 917.6 M936.1 301.0 L272.5 917.6 M949.5 301.0 L447.9 917.6 M962.9 301.0 L623.3 917.6 M976.3 301.0 L798.7 917.6 M989.7 301.0 L974.1 917.6 M1003.1 301.0 L1149.5 917.6 M1016.5 301.0 L1324.9 917.6 M1029.9 301.0 L1500.3 917.6 M1043.3 301.0 L1675.7 917.6 M1056.7 301.0 L1851.1 917.6 M1070.1 301.0 L2026.5 917.6 M1083.5 301.0 L2201.9 917.6 M1096.9 301.0 L2377.3 917.6 M1110.3 301.0 L2552.7 917.6 M1123.7 301.0 L2728.1 917.6 M1137.1 301.0 L2903.5 917.6 M1150.5 301.0 L3078.9 917.6 M1163.9 301.0 L3254.3 917.6 M1177.3 301.0 L3429.7 917.6 M1190.7 301.0 L3605.1 917.6 M1204.1 301.0 L3780.5 917.6 M1217.5 301.0 L3955.9 917.6 M1230.9 301.0 L4131.3 917.6 M1244.3 301.0 L4306.7 917.6 M1257.7 301.0 L4482.1 917.6 M1271.1 301.0 L4657.5 917.6 M1284.5 301.0 L4832.9 917.6 M1297.9 301.0 L5008.3 917.6 M1311.3 301.0 L5183.7 917.6 M1324.7 301.0 L5359.0 917.6 M1338.1 301.0 L5534.4 917.6 M1351.5 301.0 L5709.8 917.6 M1364.9 301.0 L5885.2 917.6 M1378.3 301.0 L6060.6 917.6 M1391.7 301.0 L6236.0 917.6 M1405.1 301.0 L6411.4 917.6 M1418.5 301.0 L6586.8 917.6 M1431.9 301.0 L6762.2 917.6 M1445.3 301.0 L6937.6 917.6 M1458.7 301.0 L7113.0 917.6 M1472.1 301.0 L7288.4 917.6 M1485.5 301.0 L7463.8 917.6 M1498.9 301.0 L7639.2 917.6 M1512.3 301.0 L7814.6 917.6 M1525.7 301.0 L7990.0 917.6" stroke="#887f77" stroke-width="1.3" fill="none" opacity="0.85"/></g><path d="M278 964.3 L1619 1014.0" stroke="#a1978e" stroke-width="0.85" fill="none" opacity="0.50"/><path d="M278 928.8 L1619 976.1" stroke="#a1978e" stroke-width="0.85" fill="none" opacity="0.50"/><path d="M278 896.7 L1619 941.7" stroke="#887f77" stroke-width="1.3" fill="none" opacity="0.85"/><path d="M278 867.5 L1619 910.5" stroke="#a1978e" stroke-width="0.85" fill="none" opacity="0.50"/><path d="M278 840.9 L1619 882.0" stroke="#a1978e" stroke-width="0.85" fill="none" opacity="0.50"/><path d="M278 816.4 L1619 855.8" stroke="#a1978e" stroke-width="0.85" fill="none" opacity="0.50"/><path d="M278 793.9 L1619 831.7" stroke="#887f77" stroke-width="1.3" fill="none" opacity="0.85"/><path d="M278 773.1 L1619 809.5" stroke="#a1978e" stroke-width="0.85" fill="none" opacity="0.50"/><path d="M278 753.8 L1619 788.9" stroke="#a1978e" stroke-width="0.85" fill="none" opacity="0.50"/><path d="M278 735.9 L1619 769.7" stroke="#a1978e" stroke-width="0.85" fill="none" opacity="0.47"/><path d="M278 719.2 L1619 751.9" stroke="#887f77" stroke-width="1.3" fill="none" opacity="0.85"/><path d="M278 703.7 L1619 735.2" stroke="#a1978e" stroke-width="0.85" fill="none" opacity="0.41"/><path d="M278 689.1 L1619 719.7" stroke="#a1978e" stroke-width="0.85" fill="none" opacity="0.38"/><path d="M278 675.5 L1619 705.1" stroke="#a1978e" stroke-width="0.85" fill="none" opacity="0.35"/><path d="M278 662.6 L1619 691.3" stroke="#887f77" stroke-width="1.3" fill="none" opacity="0.78"/><path d="M278 650.5 L1619 678.4" stroke="#a1978e" stroke-width="0.85" fill="none" opacity="0.31"/><path d="M278 639.1 L1619 666.2" stroke="#a1978e" stroke-width="0.85" fill="none" opacity="0.28"/><path d="M278 628.4 L1619 654.7" stroke="#a1978e" stroke-width="0.85" fill="none" opacity="0.26"/><path d="M278 618.2 L1619 643.8" stroke="#887f77" stroke-width="1.3" fill="none" opacity="0.63"/><path d="M278 608.5 L1619 633.5" stroke="#a1978e" stroke-width="0.85" fill="none" opacity="0.23"/><path d="M278 599.4 L1619 623.7" stroke="#a1978e" stroke-width="0.85" fill="none" opacity="0.21"/><path d="M278 590.7 L1619 614.4" stroke="#a1978e" stroke-width="0.85" fill="none" opacity="0.19"/><path d="M278 582.4 L1619 605.5" stroke="#887f77" stroke-width="1.3" fill="none" opacity="0.51"/><path d="M278 574.5 L1619 597.1" stroke="#a1978e" stroke-width="0.85" fill="none" opacity="0.16"/><path d="M278 567.0 L1619 589.0" stroke="#a1978e" stroke-width="0.85" fill="none" opacity="0.15"/><path d="M278 559.8 L1619 581.4" stroke="#a1978e" stroke-width="0.85" fill="none" opacity="0.13"/><path d="M278 553.0 L1619 574.0" stroke="#887f77" stroke-width="1.3" fill="none" opacity="0.41"/><path d="M278 546.4 L1619 567.0" stroke="#a1978e" stroke-width="0.85" fill="none" opacity="0.11"/><path d="M278 540.1 L1619 560.3" stroke="#a1978e" stroke-width="0.85" fill="none" opacity="0.09"/><path d="M278 534.1 L1619 553.8" stroke="#a1978e" stroke-width="0.85" fill="none" opacity="0.08"/><path d="M278 528.3 L1619 547.7" stroke="#887f77" stroke-width="1.3" fill="none" opacity="0.32"/><path d="M278 522.8 L1619 541.7" stroke="#a1978e" stroke-width="0.85" fill="none" opacity="0.06"/><path d="M278 517.4 L1619 536.0" stroke="#a1978e" stroke-width="0.85" fill="none" opacity="0.05"/><path d="M278 512.3 L1619 530.5" stroke="#a1978e" stroke-width="0.85" fill="none" opacity="0.04"/><path d="M278 507.4 L1619 525.3" stroke="#887f77" stroke-width="1.3" fill="none" opacity="0.25"/><path d="M278 502.6 L1619 520.2" stroke="#a1978e" stroke-width="0.85" fill="none" opacity="0.02"/><path d="M278 498.0 L1619 515.3" stroke="#a1978e" stroke-width="0.85" fill="none" opacity="0.01"/><path d="M278 489.3 L1619 506.0" stroke="#887f77" stroke-width="1.3" fill="none" opacity="0.19"/><path d="M278 473.7 L1619 489.2" stroke="#887f77" stroke-width="1.3" fill="none" opacity="0.14"/><path d="M278 460.0 L1619 474.6" stroke="#887f77" stroke-width="1.3" fill="none" opacity="0.09"/><path d="M278 447.8 L1619 461.6" stroke="#887f77" stroke-width="1.3" fill="none" opacity="0.05"/><path d="M278 437.0 L1619 450.0" stroke="#887f77" stroke-width="1.3" fill="none" opacity="0.01"/></g></svg>
</div>
<svg style="left:0;top:0" width="1920" height="1032" viewBox="0 0 1920 1032"><path d="M940 406.5 L1177 407.5 Q1183.5 407.8 1183.2 414 L1180.6 455 Q1180 461.8 1173 461.8 L940 461.5 Z" fill="#060e16" stroke="#5f7683" stroke-width="2.6"/><text x="1054" y="444.5" text-anchor="middle" font-size="25" fill="#dcdcdc" textLength="108" lengthAdjust="spacingAndGlyphs" font-family="Liberation Sans, Noto Sans CJK SC, sans-serif">自由标记3</text><path d="M1033 497 L1050.8 516.6 L1079.6 485.8" stroke="#6f8794" stroke-width="4" fill="none"/><path d="M1052 470.6 L1063 484 L1051.6 496.4 L1040.4 483.4 Z" fill="#a4bcc6"/><path d="M940 438.4 L1030 438.4 Q1038 438.6 1038 446 L1037.6 495 Q1037.4 502.4 1030 502.4 L940 502.4 Z" fill="#060e16" stroke="#5f7683" stroke-width="2.6"/></svg>
<div class="a" style="left:1501px;top:85px;width:92px;height:24px;background:rgba(211,142,66,0.93);border-radius:1px"></div>
<div class="t n" style="left:1536px;top:83px;color:rgba(255,225,190,0.5);font-size:11px;font-weight:700;transform:scaleX(0.9)">1800</div>
<svg style="left:1514px;top:91px" width="14" height="12" viewBox="0 0 14 12"><path d="M7.6 0.8 H0.8 V11.2 H7.6 M4.6 6 H12.6 M10 3 L13 6 L10 9" stroke="#2b1d0e" stroke-width="1.6" fill="none"/></svg>
<div class="t" style="left:1533px;top:87px;color:#2b1d0e">退出编辑</div>
<div class="a" style="left:1496px;top:168.5px;width:108px;height:36px;background:#232427;border-radius:3px"></div>
<div class="a" style="left:1568px;top:168.5px;width:36px;height:36px;background:#0a8cff;border-radius:0 3px 3px 0"></div>
<svg style="left:1506px;top:178px" width="17" height="17" viewBox="0 0 17 17"><circle cx="8" cy="8.4" r="7.6" stroke="#c4c4c4" stroke-width="1.1" fill="none"/><path d="M10 1.2 V15.6 M0.6 10.2 C5 11.6 11 11.6 15.4 10" stroke="#c4c4c4" stroke-width="1" fill="none"/></svg>
<div class="a" style="left:1541px;top:177.5px;width:18px;height:18px;border-radius:50%;background:#bfbfbf"></div>
<svg style="left:1577px;top:177px" width="18" height="18" viewBox="0 0 18 18"><circle cx="9" cy="9.4" r="8" stroke="#d6d0ca" stroke-width="1.3" fill="none"/><path d="M9.6 4.6 A4.8 4.8 0 0 1 14 9.2" stroke="#d6d0ca" stroke-width="1.3" fill="none"/></svg>
<div class="a" style="left:278px;top:156px;width:1341px;height:757px;border:1px solid #1a8cff;border-left:none;border-right:none"></div>
<div class="a" style="left:944.0px;top:152px;width:9px;height:9px;border-radius:50%;background:#fff;border:1.5px solid #1a8cff"></div>
<div class="a" style="left:1614.5px;top:152px;width:9px;height:9px;border-radius:50%;background:#fff;border:1.5px solid #1a8cff"></div>
<div class="a" style="left:1614.5px;top:530px;width:9px;height:9px;border-radius:50%;background:#fff;border:1.5px solid #1a8cff"></div>
<div class="a" style="left:273.5px;top:908px;width:9px;height:9px;border-radius:50%;background:#fff;border:1.5px solid #1a8cff"></div>
<div class="a" style="left:944.0px;top:908px;width:9px;height:9px;border-radius:50%;background:#fff;border:1.5px solid #1a8cff"></div>
<div class="a" style="left:1614.5px;top:908px;width:9px;height:9px;border-radius:50%;background:#fff;border:1.5px solid #1a8cff"></div>
<div class="a" style="left:254px;top:103px;width:24px;height:889px;background:#1e1e1e"></div>
<svg style="left:0;top:0" width="300" height="1032" viewBox="0 0 300 1032"><rect x="254" y="702.5" width="5" height="1.2" fill="#474747"/><rect x="254" y="709.4" width="5" height="1.2" fill="#474747"/><rect x="254" y="716.4" width="8" height="1.3" fill="#6c6c6c"/><rect x="254" y="723.4" width="5" height="1.2" fill="#474747"/><rect x="254" y="730.4" width="5" height="1.2" fill="#474747"/><rect x="254" y="737.4" width="5" height="1.2" fill="#474747"/><rect x="254" y="744.4" width="5" height="1.2" fill="#474747"/><rect x="254" y="751.3" width="6.5" height="1.3" fill="#5c5c5c"/><rect x="254" y="758.3" width="5" height="1.2" fill="#474747"/><rect x="254" y="765.3" width="5" height="1.2" fill="#474747"/><rect x="254" y="772.3" width="5" height="1.2" fill="#474747"/><rect x="254" y="779.3" width="5" height="1.2" fill="#474747"/><rect x="254" y="786.2" width="8" height="1.3" fill="#6c6c6c"/><rect x="254" y="793.2" width="5" height="1.2" fill="#474747"/><rect x="254" y="800.2" width="5" height="1.2" fill="#474747"/><rect x="254" y="807.2" width="5" height="1.2" fill="#474747"/><rect x="254" y="814.2" width="5" height="1.2" fill="#474747"/><rect x="254" y="821.1" width="6.5" height="1.3" fill="#5c5c5c"/><rect x="254" y="828.2" width="5" height="1.2" fill="#474747"/><rect x="254" y="835.1" width="5" height="1.2" fill="#474747"/><rect x="254" y="842.1" width="5" height="1.2" fill="#474747"/><rect x="254" y="849.1" width="5" height="1.2" fill="#474747"/><rect x="254" y="856.1" width="8" height="1.3" fill="#6c6c6c"/><rect x="254" y="863.1" width="5" height="1.2" fill="#474747"/><rect x="254" y="870.1" width="5" height="1.2" fill="#474747"/><rect x="254" y="877.1" width="5" height="1.2" fill="#474747"/><rect x="254" y="884.0" width="5" height="1.2" fill="#474747"/><rect x="254" y="891.0" width="6.5" height="1.3" fill="#5c5c5c"/><rect x="254" y="898.0" width="5" height="1.2" fill="#474747"/><rect x="254" y="905.0" width="5" height="1.2" fill="#474747"/><rect x="254" y="912.0" width="5" height="1.2" fill="#474747"/><rect x="254" y="919.0" width="5" height="1.2" fill="#474747"/><rect x="254" y="925.9" width="8" height="1.3" fill="#6c6c6c"/><rect x="254" y="932.9" width="5" height="1.2" fill="#474747"/><rect x="254" y="939.9" width="5" height="1.2" fill="#474747"/><rect x="254" y="946.9" width="5" height="1.2" fill="#474747"/><rect x="254" y="953.9" width="5" height="1.2" fill="#474747"/><rect x="254" y="960.8" width="6.5" height="1.3" fill="#5c5c5c"/><rect x="254" y="967.8" width="5" height="1.2" fill="#474747"/><rect x="254" y="974.8" width="5" height="1.2" fill="#474747"/><rect x="254" y="981.8" width="5" height="1.2" fill="#474747"/><rect x="254" y="988.8" width="5" height="1.2" fill="#474747"/><text transform="translate(272 717.0) rotate(-90)" text-anchor="middle" font-size="11" fill="#b4b4b4" font-weight="700" font-family="Liberation Sans, sans-serif" textLength="15" lengthAdjust="spacingAndGlyphs">800</text><text transform="translate(272 786.9) rotate(-90)" text-anchor="middle" font-size="11" fill="#b4b4b4" font-weight="700" font-family="Liberation Sans, sans-serif" textLength="15" lengthAdjust="spacingAndGlyphs">900</text><text transform="translate(272 856.7) rotate(-90)" text-anchor="middle" font-size="11" fill="#b4b4b4" font-weight="700" font-family="Liberation Sans, sans-serif" textLength="20" lengthAdjust="spacingAndGlyphs">1000</text><text transform="translate(272 926.5) rotate(-90)" text-anchor="middle" font-size="11" fill="#b4b4b4" font-weight="700" font-family="Liberation Sans, sans-serif" textLength="20" lengthAdjust="spacingAndGlyphs">1100</text><text transform="translate(272 988) rotate(-90)" text-anchor="middle" font-size="11" fill="#b4b4b4" font-weight="700" font-family="Liberation Sans, sans-serif">0</text><rect x="278" y="912" width="1" height="80" fill="#9a9a9a"/></svg>
<div class="a" style="left:204px;top:77px;width:742px;height:632px;background:#131416"></div>
<div class="a" style="left:204px;top:77px;width:742px;height:42px;background:#1f1f1f;border-bottom:1px solid #25272b"></div>
<div class="a" style="left:204px;top:118px;width:120px;height:591px;background:#1f1f1f"></div><div class="a" style="left:204px;top:709px;width:50px;height:323px;background:#1f1f1f"></div>
<div class="a" style="left:324px;top:118px;width:106px;height:591px;background:#1a1a1a"></div>
<div class="a" style="left:214px;top:82px;width:102px;height:32px;border:1px solid #555;border-radius:2px"></div>
<svg style="left:230px;top:91px" width="13" height="13" viewBox="0 0 13 13"><circle cx="6" cy="6" r="5.2" stroke="#a8a8a8" stroke-width="1.1" fill="none"/><path d="M9.8 9.8 L12.2 12.2" stroke="#a8a8a8" stroke-width="1.1"/></svg>
<div class="t" style="left:252px;top:88px;color:#8a8a8a">搜索组件</div>
<div class="a" style="left:325px;top:78px;width:127px;height:40px;background:#0a8cff;border-radius:0 0 0 2px"></div>
<div class="t" style="left:325px;top:88px;width:127px;text-align:center;color:#fff;font-size:14px">资源库</div>
<div class="t" style="left:452px;top:88px;width:127px;text-align:center;color:#e0e0e0;font-size:14px">资产库</div>
<svg style="left:889px;top:91px" width="13" height="13" viewBox="0 0 13 13"><path d="M11.6 5 A5.3 5.3 0 0 0 1.6 4.2 M1.4 8 A5.3 5.3 0 0 0 11.4 8.8" stroke="#d0d0d0" stroke-width="1.1" fill="none"/><path d="M1.2 1.4 V4.4 H4.2 M11.8 11.6 V8.6 H8.8" stroke="#d0d0d0" stroke-width="1.1" fill="none"/></svg>
<svg style="left:920px;top:91px" width="13" height="13" viewBox="0 0 13 13"><path d="M7.4 1.2 H0.6 V12.2 H11.8 V6" stroke="#d0d0d0" stroke-width="1.1" fill="none"/><circle cx="10.6" cy="2.4" r="1.7" stroke="#d0d0d0" stroke-width="1" fill="none"/><path d="M2.4 10.6 L6.8 6.2 M3.6 6 H7 V9.4" stroke="#d0d0d0" stroke-width="1" fill="none"/></svg>
<div class="a" style="left:208px;top:325px;width:114px;height:57px;background:#101010"></div>
<div class="a" style="left:208px;top:327px;width:114px;height:52px;background:#c46410"></div>
<svg style="left:221px;top:135px" width="16" height="16" viewBox="0 0 16 16"><rect x="0" y="0" width="7" height="7" rx="1" fill="#f59a42"/><rect x="9" y="0" width="7" height="7" rx="1" fill="#fff"/><rect x="11.2" y="2.2" width="2.6" height="2.6" fill="#222"/><rect x="0" y="9" width="7" height="7" rx="1" fill="#f59a42"/><rect x="9" y="9" width="7" height="7" rx="1" fill="#f59a42"/></svg>
<div class="t" style="left:245px;top:133px;font-size:14px;color:#dadada">全部</div>
<div class="t n" style="left:274px;width:40px;text-align:right;top:133px;font-size:14px;color:#8c8c8c;letter-spacing:0;font-weight:700;transform:scaleX(0.8);transform-origin:100% 50%">1301</div>
<svg style="left:221px;top:187px" width="16" height="16" viewBox="0 0 16 16"><path d="M0 1.5 L7.5 0.5 V16 H0 Z" fill="#f59a42"/><path d="M8.5 3.5 L16 2.5 V16 H8.5 Z" fill="#f59a42"/><path d="M2 6 H6 M2 9 H6 M2 12 H6 M10 8 H14.5 M10 11 H14.5" stroke="#fff" stroke-width="1.3"/></svg>
<div class="t" style="left:245px;top:185px;font-size:14px;color:#dadada">模型</div>
<div class="t n" style="left:274px;width:40px;text-align:right;top:185px;font-size:14px;color:#8c8c8c;letter-spacing:0;font-weight:700;transform:scaleX(0.8);transform-origin:100% 50%">940</div>
<svg style="left:221px;top:240px" width="16" height="16" viewBox="0 0 16 16"><circle cx="8" cy="8" r="8" fill="#f59a42"/><path d="M2 6 C5 4 6 2 9 1.2 C8 4 5 6.5 2.2 8 Z M13 4 C15 6 15 9 13.6 11 C12.6 9 12.4 6 13 4 Z" fill="#fff" opacity="0.9"/></svg>
<div class="t" style="left:245px;top:238px;font-size:14px;color:#dadada;font-weight:700;transform:scaleX(0.84);transform-origin:0 50%">GIS</div>
<div class="t n" style="left:274px;width:40px;text-align:right;top:238px;font-size:14px;color:#8c8c8c;letter-spacing:0;font-weight:700;transform:scaleX(0.8);transform-origin:100% 50%">10</div>
<svg style="left:221px;top:291px" width="16" height="16" viewBox="0 0 16 16"><path d="M0 0 H16 V16 H0 Z" fill="#f59a42"/><path d="M0 0 L5 0 L0 6 Z M16 11 V16 H11 Z" fill="#1f1f1f"/><path d="M8 4 C10 7 11 8.4 11 9.8 A3 3 0 0 1 5 9.8 C5 8.4 6 7 8 4 Z" fill="#fff"/></svg>
<div class="t" style="left:245px;top:289px;font-size:14px;color:#dadada">地表</div>
<div class="t n" style="left:274px;width:40px;text-align:right;top:289px;font-size:14px;color:#8c8c8c;letter-spacing:0;font-weight:700;transform:scaleX(0.8);transform-origin:100% 50%">6</div>
<svg style="left:221px;top:343px" width="16" height="16" viewBox="0 0 16 16"><path d="M8 16 C3 10.6 1.4 8.6 1.4 6.4 A6.6 6.4 0 0 1 14.6 6.4 C14.6 8.6 13 10.6 8 16 Z" fill="#f7a85a"/><circle cx="8" cy="6.4" r="2.4" fill="#fff"/></svg>
<div class="t" style="left:245px;top:341px;font-size:14px;color:#fff">标绘</div>
<div class="t n" style="left:274px;width:40px;text-align:right;top:341px;font-size:14px;color:#e3c09a;letter-spacing:0;font-weight:700;transform:scaleX(0.8);transform-origin:100% 50%">232</div>
<svg style="left:221px;top:395px" width="16" height="16" viewBox="0 0 16 16"><circle cx="8" cy="8" r="8" fill="#f59a42"/><path d="M8 8 V1.2 A6.8 6.8 0 0 1 14.8 8 Z M8 8 V14.8 A6.8 6.8 0 0 1 1.2 8 Z" fill="#fff"/></svg>
<div class="t" style="left:245px;top:393px;font-size:14px;color:#dadada">材质</div>
<div class="t n" style="left:274px;width:40px;text-align:right;top:393px;font-size:14px;color:#8c8c8c;letter-spacing:0;font-weight:700;transform:scaleX(0.8);transform-origin:100% 50%">68</div>
<svg style="left:221px;top:447px" width="16" height="16" viewBox="0 0 16 16"><path d="M8 0.5 L10.3 5.4 L15.6 6 L11.6 9.6 L12.8 15 L8 12.2 L3.2 15 L4.4 9.6 L0.4 6 L5.7 5.4 Z" fill="#f59a42"/><circle cx="8" cy="8" r="2" fill="#fff"/><circle cx="14.5" cy="13.5" r="1.2" fill="#f59a42"/><circle cx="2" cy="13" r="1" fill="#f59a42"/></svg>
<div class="t" style="left:245px;top:445px;font-size:14px;color:#dadada">动效</div>
<div class="t n" style="left:274px;width:40px;text-align:right;top:445px;font-size:14px;color:#8c8c8c;letter-spacing:0;font-weight:700;transform:scaleX(0.8);transform-origin:100% 50%">4</div>
<svg style="left:221px;top:499px" width="16" height="16" viewBox="0 0 16 16"><path d="M8 0 L15.4 4 V12 L8 16 L0.6 12 V4 Z" fill="#f59a42"/><circle cx="8" cy="8" r="4.6" fill="#fff"/><path d="M8 8 V12 M8 8 L4.6 6 M8 8 L11.4 6" stroke="#f59a42" stroke-width="1.3"/></svg>
<div class="t" style="left:245px;top:497px;font-size:14px;color:#dadada">场景</div>
<div class="t n" style="left:274px;width:40px;text-align:right;top:497px;font-size:14px;color:#8c8c8c;letter-spacing:0;font-weight:700;transform:scaleX(0.8);transform-origin:100% 50%">11</div>
<div class="t" style="left:338px;top:132px;color:#1e8fff;font-weight:500">标记</div>
<svg style="left:411px;top:138px" width="5" height="9" viewBox="0 0 5 9"><path d="M0.6 0.6 L4.4 4.5 L0.6 8.4" stroke="#8a8a8a" stroke-width="1" fill="none"/></svg>
<div class="t" style="left:338px;top:166px;color:#fff;font-weight:500">飞线</div>
<svg style="left:411px;top:172px" width="5" height="9" viewBox="0 0 5 9"><path d="M0.6 0.6 L4.4 4.5 L0.6 8.4" stroke="#8a8a8a" stroke-width="1" fill="none"/></svg>
<div class="t" style="left:338px;top:200px;color:#fff;font-weight:500">电子围栏</div>
<svg style="left:411px;top:206px" width="5" height="9" viewBox="0 0 5 9"><path d="M0.6 0.6 L4.4 4.5 L0.6 8.4" stroke="#8a8a8a" stroke-width="1" fill="none"/></svg>
<div class="t" style="left:338px;top:234px;color:#fff;font-weight:500">管道</div>
<svg style="left:411px;top:240px" width="5" height="9" viewBox="0 0 5 9"><path d="M0.6 0.6 L4.4 4.5 L0.6 8.4" stroke="#8a8a8a" stroke-width="1" fill="none"/></svg>
<div class="t" style="left:338px;top:268px;color:#fff;font-weight:500">流光</div>
<svg style="left:411px;top:274px" width="5" height="9" viewBox="0 0 5 9"><path d="M0.6 0.6 L4.4 4.5 L0.6 8.4" stroke="#8a8a8a" stroke-width="1" fill="none"/></svg>
<div class="t" style="left:338px;top:302px;color:#fff;font-weight:500">多边形</div>
<svg style="left:411px;top:308px" width="5" height="9" viewBox="0 0 5 9"><path d="M0.6 0.6 L4.4 4.5 L0.6 8.4" stroke="#8a8a8a" stroke-width="1" fill="none"/></svg>
<div class="t" style="left:338px;top:336px;color:#fff;font-weight:500">热力图</div>
<svg style="left:411px;top:342px" width="5" height="9" viewBox="0 0 5 9"><path d="M0.6 0.6 L4.4 4.5 L0.6 8.4" stroke="#8a8a8a" stroke-width="1" fill="none"/></svg>
<div class="t" style="left:338px;top:370px;color:#fff;font-weight:500">视频融合</div>
<svg style="left:411px;top:376px" width="5" height="9" viewBox="0 0 5 9"><path d="M0.6 0.6 L4.4 4.5 L0.6 8.4" stroke="#8a8a8a" stroke-width="1" fill="none"/></svg>
<div class="t" style="left:338px;top:404px;color:#fff;font-weight:500">默认</div>
<svg style="left:411px;top:410px" width="5" height="9" viewBox="0 0 5 9"><path d="M0.6 0.6 L4.4 4.5 L0.6 8.4" stroke="#8a8a8a" stroke-width="1" fill="none"/></svg>
<div class="chip" style="left:440px;top:131px;">全部</div>
<div class="chip" style="left:492px;top:131px;">通用标记</div>
<div class="chip" style="left:568px;top:131px;background:#0a8cff;color:#fff;">免费标记</div>
<div class="chip" style="left:644px;top:131px;">智慧园区</div>
<div class="chip" style="left:720px;top:131px;">智慧城市</div>
<div class="chip" style="left:796px;top:131px;">大场景标记</div>
<div class="chip" style="left:440px;top:163px">智慧管廊</div>
<div class="chip" style="left:516px;top:163px">主题标记</div>
<div class="a" style="left:440px;top:201px;width:90px;height:90px;background:#25272b"></div>
<div class="a" style="left:451px;top:237px;width:69px;height:15px;background:#14202a;border:1px solid #46596a;border-radius:2px"></div>
<svg style="left:479px;top:255px" width="12" height="11" viewBox="0 0 12 11"><path d="M6.1 1.4 L8.2 3.7 L6.1 6 L4 3.7 Z" fill="#bcd3e0"/><path d="M0.9 4.8 L6.1 9.8 L11.3 4.8" stroke="#9fb0ba" stroke-width="0.9" fill="none"/></svg>
<div class="t n" style="left:430px;width:110px;text-align:center;top:292px;color:#e0e0e0">免费标记2</div>
<div class="a" style="left:416px;top:181.5px;width:145px;height:137.5px;border:4.4px solid #f24c4c;border-radius:8px"></div>
<div class="a" style="left:204px;top:321px;width:121px;height:65px;border:4px solid #f24c4c;border-radius:7px"></div>
<svg style="left:0;top:0" width="1920" height="1032" viewBox="0 0 1920 1032"><path stroke="#f24c4c" stroke-width="1.6" stroke-linejoin="round" d="M413.2 305.2 L382.6 309.6 L388.3 319 L333.2 358.4 L335.2 361.2 L393.4 328.4 L398.4 331.8 Z" fill="#f24c4c"/><path stroke="#f24c4c" stroke-width="1.6" stroke-linejoin="round" d="M287 395.8 L279.6 427.4 L288.6 429.4 L339 578.6 L342 577.6 L302.8 423.6 L310.2 418.4 Z" fill="#f24c4c"/></svg>
<div class="a" style="left:1619px;top:77px;width:301px;height:915px;background:#131416;border-left:1px solid #232427"></div>
<svg style="left:1633px;top:90px" width="10" height="13" viewBox="0 0 10 13"><rect x="0.6" y="0.6" width="8.8" height="11.8" rx="1" stroke="#a0a0a0" stroke-width="1.1" fill="none"/><path d="M3 3.6 H7.6 M3 6.4 H7.6 M3 9.2 H7.6 M2.6 0.6 V12.4" stroke="#a0a0a0" stroke-width="0.9"/></svg>
<div class="t n" style="left:1646px;top:86px"><span style="color:#a6a6a6">3D空场景<span style="margin:0 3.7px;color:#8a8a8a">&gt;</span>场景<span style="margin:0 3.7px;color:#8a8a8a">&gt;</span>标绘层<span style="margin:0 3.7px;color:#8a8a8a">&gt;</span></span><span style="color:#fff;font-weight:700">免费标记2</span></div>
<div class="a" style="left:1620px;top:115px;width:300px;height:1px;background:#26282b"></div>
<div class="t b" style="left:1638px;top:124px;color:#fff">样式</div>
<div class="t b" style="left:1678px;top:124px;color:#fff">交互</div>
<div class="t b" style="left:1718px;top:124px;color:#fff">数据</div>
<div class="t b" style="left:1758px;top:124px;color:#fff">代码</div>
<div class="a" style="left:1710px;top:150px;width:40px;height:2px;background:#0a8cff"></div>
<div class="a" style="left:1824px;top:122px;width:80px;height:24px;background:#1f1f1f;border-radius:3px"></div>
<div class="t b n" style="left:1832px;top:124px;color:#fff">Default ...</div>
<svg style="left:1887px;top:131px" width="11" height="7" viewBox="0 0 11 7"><path d="M0.8 0.8 L5.5 5.6 L10.2 0.8" stroke="#fff" stroke-width="1.4" fill="none"/></svg>
<div class="a" style="left:1620px;top:153px;width:300px;height:36px;background:#1f1f1f"></div>
<svg style="left:1633px;top:169px" width="8" height="6" viewBox="0 0 8 6"><path d="M0 0 H8 L4 5.6 Z" fill="#d0d0d0"/></svg>
<div class="t b" style="left:1650px;top:161px;color:#fff">自由标记层</div>
<svg style="left:1896px;top:163px" width="12" height="14" viewBox="0 0 12 14"><rect x="0.6" y="5.6" width="10.8" height="7.8" rx="1.2" stroke="#d0d0d0" stroke-width="1.1" fill="none"/><path d="M3 5.6 V3.6 A3 3 0 0 1 9 3.6 V5.6" stroke="#d0d0d0" stroke-width="1.1" fill="none"/><rect x="5.3" y="8" width="1.6" height="3" fill="#d0d0d0"/></svg>
<div class="a" style="left:1620px;top:224px;width:300px;height:36px;background:#1f1f1f"></div>
<svg style="left:1633px;top:240px" width="8" height="6" viewBox="0 0 8 6"><path d="M0 0 H8 L4 5.6 Z" fill="#d0d0d0"/></svg>
<div class="t b" style="left:1650px;top:232px;color:#fff">数据标记层</div>
<svg style="left:1896px;top:234px" width="12" height="14" viewBox="0 0 12 14"><rect x="0.6" y="5.6" width="10.8" height="7.8" rx="1.2" stroke="#d0d0d0" stroke-width="1.1" fill="none"/><path d="M3 5.6 V3.6 A3 3 0 0 1 9 3.6 V5.6" stroke="#d0d0d0" stroke-width="1.1" fill="none"/><rect x="5.3" y="8" width="1.6" height="3" fill="#d0d0d0"/></svg>
<div class="lab" style="top:195px">复制数据</div>
<div class="a" style="left:1725px;top:194px;width:185px;height:24px;background:#25282e;border-radius:2px;box-shadow:0 0 3px rgba(0,0,0,0.8)"></div>
<div class="t" style="left:1725px;width:185px;text-align:center;top:196px;color:#1e8fff">复制</div>
<div class="lab" style="top:266px">坐标类型</div>
<div class="inp" style="top:265px;height:24px;line-height:22px;padding-left:7px">空间坐标</div>
<svg style="left:1889px;top:274px" width="11" height="7" viewBox="0 0 11 7"><path d="M0.8 0.8 L5.5 5.6 L10.2 0.8" stroke="#9a9a9a" stroke-width="1.1" fill="none"/></svg>
<div class="lab n" style="top:301px">标记ID</div>
<svg style="left:1662px;top:305px" width="12" height="12" viewBox="0 0 12 12"><circle cx="6" cy="6" r="5.3" stroke="#d0d0d0" stroke-width="1" fill="none"/><path d="M4.2 4.8 C4.2 2.6 7.8 2.6 7.8 4.8 C7.8 6 6 6 6 7.4" stroke="#d0d0d0" stroke-width="1" fill="none"/><circle cx="6" cy="9.2" r="0.7" fill="#d0d0d0"/></svg>
<div class="inp" style="top:299px;height:25px;line-height:26px">拖入数据字段</div>
<div class="lab" style="top:336px">标记名称</div>
<div class="inp" style="top:334px;height:39px"></div>
<div class="pill" style="top:341px">名字</div>
<div class="lab" style="top:385px">位置</div>
<svg style="left:1652px;top:388px" width="12" height="12" viewBox="0 0 12 12"><circle cx="6" cy="6" r="5.3" stroke="#d0d0d0" stroke-width="1" fill="none"/><path d="M4.2 4.8 C4.2 2.6 7.8 2.6 7.8 4.8 C7.8 6 6 6 6 7.4" stroke="#d0d0d0" stroke-width="1" fill="none"/><circle cx="6" cy="9.2" r="0.7" fill="#d0d0d0"/></svg>
<div class="inp" style="top:383px;height:39px"></div>
<div class="pill" style="top:390px">空间位置</div>
<svg style="left:1888px;top:350px" width="9" height="9" viewBox="0 0 9 9"><path d="M0.6 0.6 L8.4 8.4 M8.4 0.6 L0.6 8.4" stroke="#f0f0f0" stroke-width="1.5" fill="none"/></svg>
<svg style="left:1888px;top:399px" width="9" height="9" viewBox="0 0 9 9"><path d="M0.6 0.6 L8.4 8.4 M8.4 0.6 L0.6 8.4" stroke="#f0f0f0" stroke-width="1.5" fill="none"/></svg>
<div class="lab" style="top:434px">旋转</div>
<div class="inp" style="top:432px;height:25px;line-height:26px">拖入数据字段</div>
<div class="lab" style="top:469px">缩放</div>
<div class="inp" style="top:467px;height:25px;line-height:26px">拖入数据字段</div>
<div class="lab" style="top:504px">跟随物体</div>
<div class="inp" style="top:502px;height:25px;line-height:26px">拖入数据字段</div>
<div class="lab" style="top:539px">是否跟随路径旋转</div>
<div class="inp" style="top:537px;height:25px;line-height:26px">拖入数据字段</div>
<div class="a" style="left:1620px;top:572px;width:300px;height:1px;background:#2a2b2e"></div>
<div class="t b" style="left:1638px;top:581px;color:#fff;font-weight:500">看板公共数据</div>
<div class="t b" style="left:1726px;top:581px;color:#fff;font-weight:500">组件自有数据</div>
<div class="a" style="left:1630px;top:607px;width:88px;height:1px;background:#0a8cff"></div>
<div class="a" style="left:1620px;top:608px;width:300px;height:43px;background:#1e1e1f"></div>
<div class="a" style="left:1624px;top:612px;width:214px;height:35px;border:1px solid #4a4a4c;border-radius:2px"></div>
<svg style="left:1631px;top:624px" width="12" height="12" viewBox="0 0 12 12"><circle cx="5.4" cy="5.4" r="4.7" stroke="#9a9a9a" stroke-width="1" fill="none"/><path d="M8.8 8.8 L11 11" stroke="#9a9a9a" stroke-width="1"/></svg>
<div class="t" style="left:1647px;top:620px;color:#7a7a7a;font-size:10px">（区分大小写）</div>
<div class="a" style="left:1843px;top:613px;width:34px;height:34px;border:1px solid #4a4a4c;border-radius:2px"></div>
<svg style="left:1854px;top:624px" width="12" height="12" viewBox="0 0 12 12"><path d="M6 0.5 V11.5 M0.5 6 H11.5" stroke="#c0c0c0" stroke-width="1.1"/></svg>
<div class="a" style="left:1882px;top:613px;width:34px;height:34px;border:1px solid #4a4a4c;border-radius:2px"></div>
<svg style="left:1893px;top:624px" width="13" height="13" viewBox="0 0 13 13"><path d="M6 1.6 H2.6 A1.6 1.6 0 0 0 1 3.2 V10.4 A1.6 1.6 0 0 0 2.6 12 H9.8 A1.6 1.6 0 0 0 11.4 10.4 V7" stroke="#e6e6e6" stroke-width="1.2" fill="none"/><path d="M5 8.2 L5.4 6 L10.4 1 L12 2.6 L7 7.6 Z" stroke="#e6e6e6" stroke-width="1.1" fill="none"/></svg>
<div class="a" style="left:1620px;top:887px;width:150px;height:35px;background:#1c2a36"></div>
<div class="t" style="left:1646px;top:649px;color:#fff;font-weight:500">图片</div>
<div class="t" style="left:1646px;top:684px;color:#fff;font-weight:500">指标卡</div>
<div class="t" style="left:1646px;top:719px;color:#fff;font-weight:500">多边形</div>
<div class="t" style="left:1646px;top:754px;color:#fff;font-weight:500">底图层</div>
<div class="t" style="left:1646px;top:789px;color:#fff;font-weight:500">呼吸层</div>
<div class="t" style="left:1646px;top:824px;color:#fff;font-weight:500">路线层</div>
<div class="t n" style="left:1646px;top:859px;color:#fff;font-weight:500">下拉菜单2</div>
<div class="t" style="left:1646px;top:894px;color:#1e8fff;font-weight:500">标记点</div>
<div class="t" style="left:1646px;top:929px;color:#fff;font-weight:500">标记点跟随</div>
<div class="t" style="left:1646px;top:964px;color:#fff;font-weight:500">飞线层</div>
<div class="a" style="left:1770px;top:679px;width:150px;height:1px;background:#26272a"></div>
<div class="a" style="left:1783px;top:660px;width:11px;height:11px;border:1.5px solid #d4d4d4;border-radius:0"></div>
<div class="t" style="left:1800px;top:656px;color:#d8d8d8">id</div>
<div class="t" style="left:1874px;width:40px;text-align:right;top:655px;font-size:11px;font-weight:700;color:#9a9a9a;letter-spacing:-1.5px">123</div>
<div class="a" style="left:1770px;top:680px;width:150px;height:28px;background:#0a8cff"></div>
<svg style="left:1782px;top:689px" width="12" height="10" viewBox="0 0 12 10"><path d="M1 5 L4.4 8.4 L11 1.4" stroke="#fff" stroke-width="1.8" fill="none"/></svg>
<div class="t" style="left:1800px;top:685px;color:#fff">名字</div>
<div class="t" style="left:1874px;width:40px;text-align:right;top:684px;font-size:11px;font-weight:700;color:#cfe6ff;letter-spacing:-0.9px">Str.</div>
<div class="a" style="left:1770px;top:709px;width:150px;height:28px;background:#0a8cff"></div>
<svg style="left:1782px;top:718px" width="12" height="10" viewBox="0 0 12 10"><path d="M1 5 L4.4 8.4 L11 1.4" stroke="#fff" stroke-width="1.8" fill="none"/></svg>
<div class="t" style="left:1800px;top:714px;color:#fff">空间位置</div>
<div class="t" style="left:1874px;width:40px;text-align:right;top:713px;font-size:11px;font-weight:700;color:#cfe6ff;letter-spacing:-0.9px">Str.</div>
<div class="a" style="left:1770px;top:766px;width:150px;height:1px;background:#26272a"></div>
<div class="a" style="left:1783px;top:747px;width:11px;height:11px;border:1.5px solid #d4d4d4;border-radius:0"></div>
<div class="t" style="left:1800px;top:743px;color:#d8d8d8">经纬度位置</div>
<div class="t" style="left:1874px;width:40px;text-align:right;top:742px;font-size:11px;font-weight:700;color:#9a9a9a;letter-spacing:-0.9px">Str.</div>
<div class="a" style="left:1770px;top:795px;width:150px;height:1px;background:#26272a"></div>
<div class="a" style="left:1783px;top:776px;width:11px;height:11px;border:1.5px solid #d4d4d4;border-radius:0"></div>
<div class="t" style="left:1800px;top:772px;color:#d8d8d8">旋转</div>
<div class="t" style="left:1874px;width:40px;text-align:right;top:771px;font-size:11px;font-weight:700;color:#9a9a9a;letter-spacing:-0.9px">Str.</div>
<div class="a" style="left:1770px;top:824px;width:150px;height:1px;background:#26272a"></div>
<div class="a" style="left:1783px;top:805px;width:11px;height:11px;border:1.5px solid #d4d4d4;border-radius:0"></div>
<div class="t" style="left:1800px;top:801px;color:#d8d8d8">缩放</div>
<div class="t" style="left:1874px;width:40px;text-align:right;top:800px;font-size:11px;font-weight:700;color:#9a9a9a;letter-spacing:-0.9px">Str.</div>
<div class="a" style="left:1770px;top:853px;width:150px;height:1px;background:#26272a"></div>
<div class="a" style="left:1783px;top:834px;width:11px;height:11px;border:1.5px solid #d4d4d4;border-radius:0"></div>
<div class="t" style="left:1800px;top:830px;color:#d8d8d8">跟随物体</div>
<div class="t" style="left:1874px;width:40px;text-align:right;top:829px;font-size:11px;font-weight:700;color:#9a9a9a;letter-spacing:-0.9px">Str.</div>
<div class="a" style="left:254px;top:992px;width:1666px;height:40px;background:#1f1f1f"></div>
<div class="a" style="left:1620px;top:992px;width:300px;height:40px;background:#1c1c1d"></div>
<div class="a" style="left:254px;top:993px;width:1px;height:39px;background:#2a2a2a"></div>
<div class="a" style="left:318px;top:993px;width:1px;height:39px;background:#2a2a2a"></div>
<div class="a" style="left:446px;top:993px;width:1px;height:39px;background:#2a2a2a"></div>
<div class="a" style="left:479px;top:993px;width:1px;height:39px;background:#2a2a2a"></div>
<div class="a" style="left:542px;top:993px;width:1px;height:39px;background:#2a2a2a"></div>
<div class="a" style="left:318.5px;top:993px;width:128px;height:1.3px;background:#1a8cff"></div>
<div class="t b" style="left:265px;top:1003px;color:#fff;font-weight:500">前景</div>
<svg style="left:298px;top:1000px" width="13" height="13" viewBox="0 0 13 13"><circle cx="6.5" cy="6.5" r="5.8" stroke="#e6e6e6" stroke-width="1" fill="none"/><path d="M6.5 3.6 V9.4 M3.6 6.5 H9.4" stroke="#e6e6e6" stroke-width="1"/></svg>
<svg style="left:329px;top:1010px" width="11" height="11" viewBox="0 0 11 11"><rect x="0.7" y="0.7" width="9.6" height="7" stroke="#1e8fff" stroke-width="1.3" fill="none"/><path d="M3.4 7.7 L2.2 10.4 M7.6 7.7 L8.8 10.4" stroke="#1e8fff" stroke-width="1.2"/></svg>
<div class="t n" style="left:346px;top:1005px;color:#1e8fff">子看板1</div>
<svg style="left:456px;top:1007px" width="13" height="13" viewBox="0 0 13 13"><path d="M6.5 0 V13 M0 6.5 H13" stroke="#fff" stroke-width="1.8"/></svg>
<div class="t b" style="left:490px;top:1003px;color:#fff;font-weight:500">背景</div>
<svg style="left:522px;top:1000px" width="13" height="13" viewBox="0 0 13 13"><circle cx="6.5" cy="6.5" r="5.8" stroke="#e6e6e6" stroke-width="1" fill="none"/><path d="M6.5 3.6 V9.4 M3.6 6.5 H9.4" stroke="#e6e6e6" stroke-width="1"/></svg>
<div class="a" style="left:1571px;top:1000px;width:1px;height:26px;background:#292929"></div><div class="a" style="left:1596px;top:1000px;width:1px;height:26px;background:#292929"></div>
<div class="t" style="left:1505px;top:1002px;color:#c8c8c8;font-size:11px;font-weight:700;letter-spacing:-0.4px">69.84%</div>
<svg style="left:1551px;top:1005px" width="15" height="15" viewBox="0 0 15 15"><rect x="0.7" y="0.7" width="13.6" height="13.6" rx="1" stroke="#e6e6e6" stroke-width="1.2" fill="none"/><path d="M7.5 1.6 L10 4.6 H5 Z M7.5 13.4 L10 10.4 H5 Z M1.6 7.5 L4.6 5 V10 Z M13.4 7.5 L10.4 5 V10 Z" fill="#e6e6e6"/><path d="M7.5 4 V11 M4 7.5 H11" stroke="#e6e6e6" stroke-width="1.4"/></svg>
<svg style="left:1574px;top:1007px" width="18" height="11" viewBox="0 0 18 11"><rect x="0.7" y="0.7" width="16.6" height="9.6" rx="1.6" stroke="#e6e6e6" stroke-width="1.2" fill="none"/><path d="M3.4 3.8 H14.6 M4.6 7 H13.4" stroke="#e6e6e6" stroke-width="1.5" stroke-dasharray="1.6 1.4"/></svg>
<svg style="left:1599px;top:1005px" width="16" height="15" viewBox="0 0 16 15"><rect x="0.7" y="0.7" width="14.6" height="13.6" rx="1" stroke="#e6e6e6" stroke-width="1.2" fill="none"/><path d="M3.8 4.6 L6.8 7.4 L3.8 10.2 M8 10.6 H12" stroke="#e6e6e6" stroke-width="1.2" fill="none"/></svg>
<div class="t" style="left:1623px;top:991px;color:#c8c8c8;font-size:11px;letter-spacing:-0.05px">内存:&nbsp; <b>150 / 3939 / 4096 MB&nbsp; 50 / 200 MB</b></div>
<div class="t" style="left:1820px;width:97px;text-align:right;top:991px;color:#c8c8c8;font-size:11px;letter-spacing:-0.05px"><b>FPS:&nbsp; 58</b></div>
<div class="t" style="left:1623px;top:1011px;color:#c8c8c8;font-size:11px;letter-spacing:-0.05px">组件数: <b>2 / 2</b>&nbsp;&nbsp; 子组件数: <b>6</b></div>
<div class="t" style="left:1820px;width:97px;text-align:right;top:1011px;color:#c8c8c8;font-size:11px;letter-spacing:-0.05px"><b>4.6.9</b></div>
</body></html>
